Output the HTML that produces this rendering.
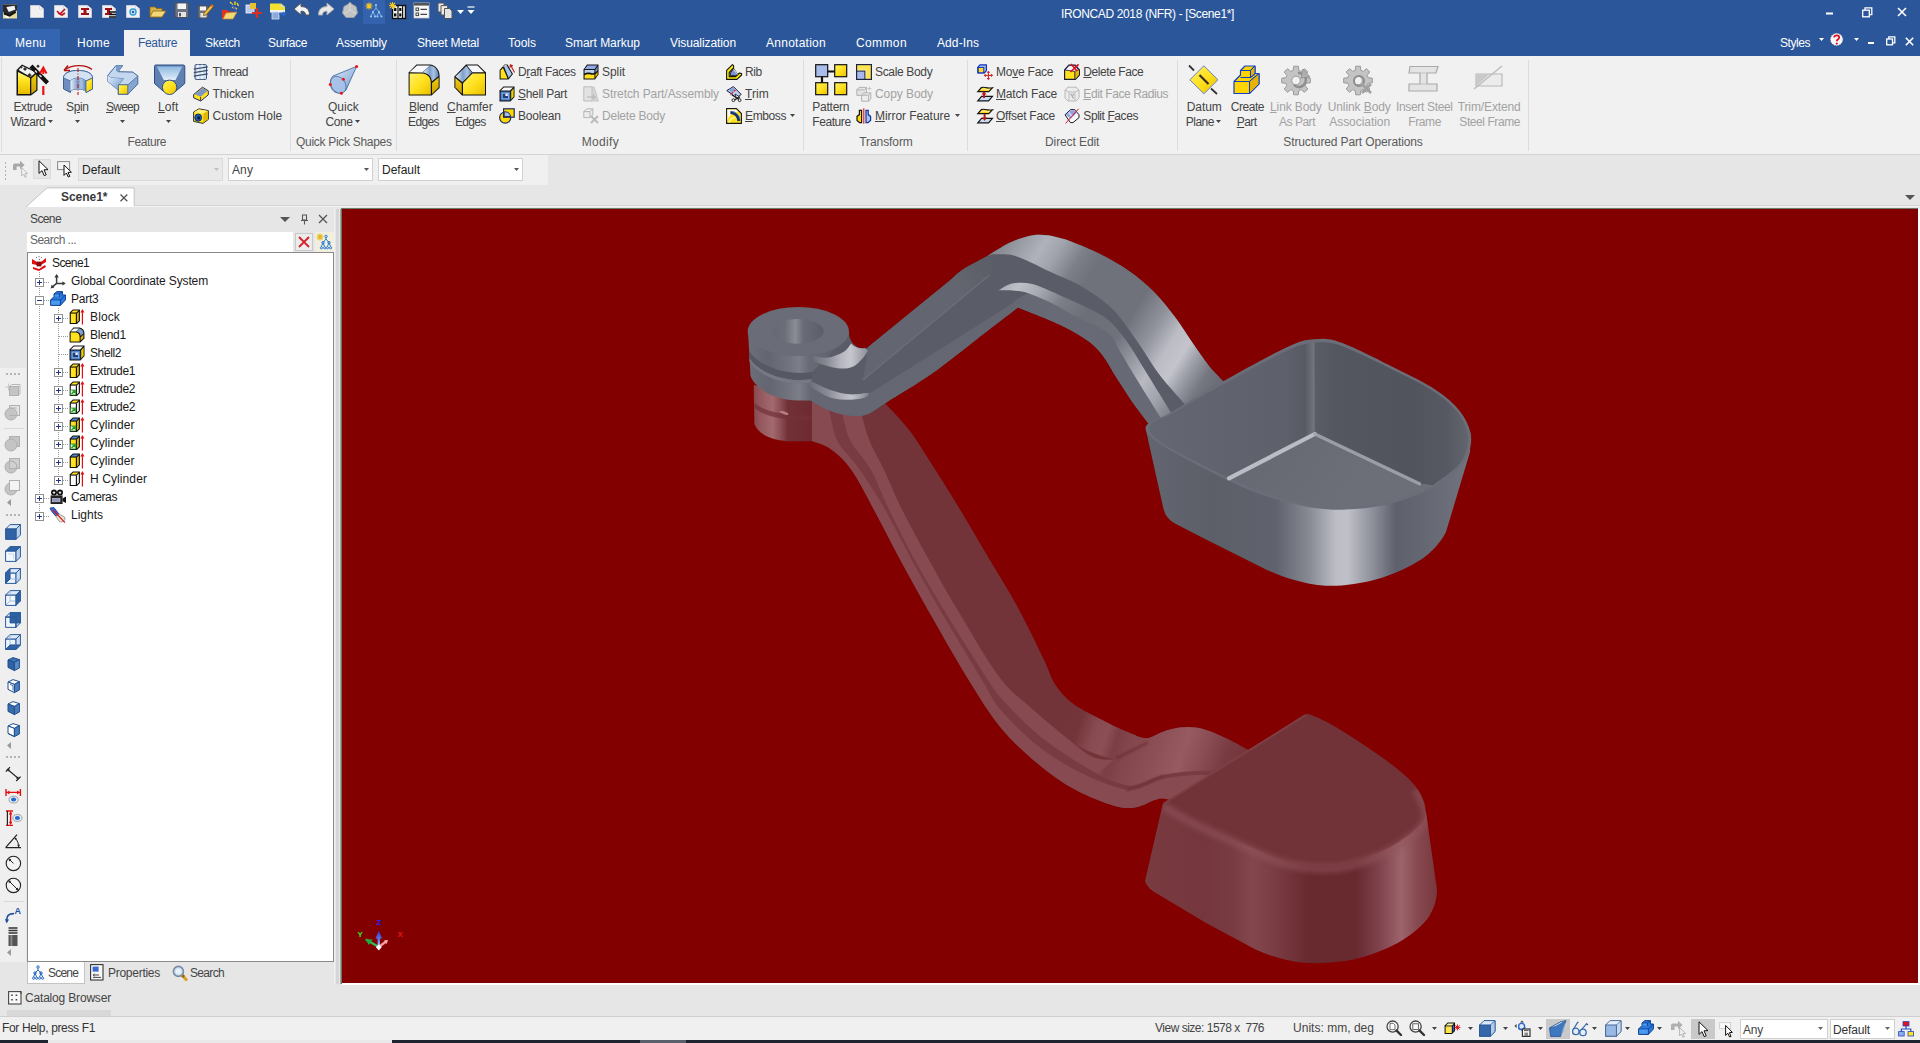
<!DOCTYPE html>
<html><head><meta charset="utf-8"><title>IRONCAD 2018 (NFR) - [Scene1*]</title>
<style>
html,body{margin:0;padding:0;}
body{width:1920px;height:1043px;overflow:hidden;position:relative;background:#e6e6e6;font-family:'Liberation Sans',sans-serif;font-size:12px;line-height:14px;}
.t{position:absolute;white-space:pre;}
u{text-decoration:underline;text-underline-offset:1px;}
svg{display:block;overflow:visible}
</style></head><body>
<div style="position:absolute;left:0px;top:0px;width:1920px;height:56px;background:#2b579a;"></div>
<div style="position:absolute;left:0px;top:29px;width:60px;height:27px;background:#3465b0;"></div>
<div style="position:absolute;left:124px;top:30px;width:66px;height:26px;background:#f1f1f1;"></div>
<div style="position:absolute;left:0px;top:56px;width:1920px;height:98px;background:#f1f1f1;"></div>
<div style="position:absolute;left:0px;top:154px;width:1920px;height:1px;background:#d4d4d4;"></div>
<div style="position:absolute;left:0px;top:155px;width:548px;height:30px;background:#f0f0f0;"></div>
<div style="position:absolute;left:290px;top:60px;width:1px;height:91px;background:#dcdcdc;"></div>
<div style="position:absolute;left:396px;top:60px;width:1px;height:91px;background:#dcdcdc;"></div>
<div style="position:absolute;left:803px;top:60px;width:1px;height:91px;background:#dcdcdc;"></div>
<div style="position:absolute;left:967px;top:60px;width:1px;height:91px;background:#dcdcdc;"></div>
<div style="position:absolute;left:1177px;top:60px;width:1px;height:91px;background:#dcdcdc;"></div>
<div style="position:absolute;left:1528px;top:60px;width:1px;height:91px;background:#dcdcdc;"></div>
<div style="position:absolute;left:1px;top:57px;width:1px;height:95px;background:#dedede;"></div>
<span class="t" style="left:1061.00px;top:7px;color:#ffffff;letter-spacing:-0.369px;">IRONCAD 2018 (NFR) - [Scene1*]</span>
<span class="t" style="left:15.00px;top:36px;color:#ffffff;letter-spacing:0.242px;">Menu</span>
<span class="t" style="left:77.00px;top:36px;color:#ffffff;letter-spacing:0.246px;">Home</span>
<span class="t" style="left:138.00px;top:36px;color:#2b579a;letter-spacing:-0.337px;">Feature</span>
<span class="t" style="left:205.00px;top:36px;color:#ffffff;letter-spacing:-0.281px;">Sketch</span>
<span class="t" style="left:268.00px;top:36px;color:#ffffff;letter-spacing:-0.337px;">Surface</span>
<span class="t" style="left:336.00px;top:36px;color:#ffffff;letter-spacing:-0.127px;">Assembly</span>
<span class="t" style="left:417.00px;top:36px;color:#ffffff;letter-spacing:-0.186px;">Sheet Metal</span>
<span class="t" style="left:508.00px;top:36px;color:#ffffff;">Tools</span>
<span class="t" style="left:565.00px;top:36px;color:#ffffff;letter-spacing:-0.030px;">Smart Markup</span>
<span class="t" style="left:670.00px;top:36px;color:#ffffff;letter-spacing:-0.089px;">Visualization</span>
<span class="t" style="left:766.00px;top:36px;color:#ffffff;letter-spacing:0.261px;">Annotation</span>
<span class="t" style="left:856.00px;top:36px;color:#ffffff;letter-spacing:0.385px;">Common</span>
<span class="t" style="left:937.00px;top:36px;color:#ffffff;letter-spacing:0.092px;">Add-Ins</span>
<span class="t" style="left:1780.00px;top:36px;color:#ffffff;letter-spacing:-0.448px;">Styles</span>
<span class="t" style="left:13.50px;top:100px;color:#444444;letter-spacing:-0.408px;">Extrude</span>
<span class="t" style="left:10.40px;top:115px;color:#444444;letter-spacing:-0.391px;">Wizard</span>
<svg style="position:absolute;left:48px;top:120px;" width="5" height="3" viewBox="0 0 5 3"><path d="M0,0 L5,0 L2.5,3 Z" fill="#444444"/></svg>
<span class="t" style="left:66.00px;top:100px;color:#444444;letter-spacing:-0.383px;">S<u>p</u>in</span>
<svg style="position:absolute;left:75px;top:120px;" width="5" height="3" viewBox="0 0 5 3"><path d="M0,0 L5,0 L2.5,3 Z" fill="#444444"/></svg>
<span class="t" style="left:106.00px;top:100px;color:#444444;letter-spacing:-0.741px;"><u>S</u>weep</span>
<svg style="position:absolute;left:120px;top:120px;" width="5" height="3" viewBox="0 0 5 3"><path d="M0,0 L5,0 L2.5,3 Z" fill="#444444"/></svg>
<span class="t" style="left:158.00px;top:100px;color:#444444;letter-spacing:0.121px;"><u>L</u>oft</span>
<svg style="position:absolute;left:166px;top:120px;" width="5" height="3" viewBox="0 0 5 3"><path d="M0,0 L5,0 L2.5,3 Z" fill="#444444"/></svg>
<span class="t" style="left:212.50px;top:65px;color:#444444;letter-spacing:-0.422px;">Thread</span>
<span class="t" style="left:212.50px;top:87px;color:#444444;letter-spacing:-0.076px;">Thicken</span>
<span class="t" style="left:212.50px;top:109px;color:#444444;letter-spacing:0.040px;">Custom Hole</span>
<span class="t" style="left:127.50px;top:135px;color:#5a5a5a;letter-spacing:-0.408px;">Feature</span>
<span class="t" style="left:328.00px;top:100px;color:#444444;letter-spacing:0.023px;">Quick</span>
<span class="t" style="left:325.40px;top:115px;color:#444444;letter-spacing:-0.347px;">Cone</span>
<svg style="position:absolute;left:355px;top:120px;" width="5" height="3" viewBox="0 0 5 3"><path d="M0,0 L5,0 L2.5,3 Z" fill="#444444"/></svg>
<span class="t" style="left:296.00px;top:135px;color:#5a5a5a;letter-spacing:-0.295px;">Quick Pick Shapes</span>
<span class="t" style="left:409.00px;top:100px;color:#444444;letter-spacing:-0.341px;"><u>B</u>lend</span>
<span class="t" style="left:408.00px;top:115px;color:#444444;letter-spacing:-0.606px;">Edges</span>
<span class="t" style="left:447.00px;top:100px;color:#444444;letter-spacing:-0.045px;"><u>C</u>hamfer</span>
<span class="t" style="left:455.00px;top:115px;color:#444444;letter-spacing:-0.666px;">Edges</span>
<span class="t" style="left:518.00px;top:65px;color:#444444;letter-spacing:-0.392px;">D<u>r</u>aft Faces</span>
<span class="t" style="left:518.00px;top:87px;color:#444444;letter-spacing:-0.303px;"><u>S</u>hell Part</span>
<span class="t" style="left:518.00px;top:109px;color:#444444;letter-spacing:-0.192px;">Boolean</span>
<span class="t" style="left:602.00px;top:65px;color:#444444;letter-spacing:-0.069px;">Split</span>
<span class="t" style="left:602.00px;top:87px;color:#a2a2a2;letter-spacing:-0.082px;">Stretch Part/Assembly</span>
<span class="t" style="left:602.00px;top:109px;color:#a2a2a2;letter-spacing:-0.216px;">Delete Body</span>
<span class="t" style="left:581.70px;top:135px;color:#5a5a5a;letter-spacing:0.326px;">Modify</span>
<span class="t" style="left:745.00px;top:65px;color:#444444;letter-spacing:-0.439px;">Rib</span>
<span class="t" style="left:745.00px;top:87px;color:#444444;letter-spacing:0.038px;"><u>T</u>rim</span>
<span class="t" style="left:745.00px;top:109px;color:#444444;letter-spacing:-0.393px;"><u>E</u>mboss</span>
<svg style="position:absolute;left:790px;top:114px;" width="5" height="3" viewBox="0 0 5 3"><path d="M0,0 L5,0 L2.5,3 Z" fill="#444444"/></svg>
<span class="t" style="left:812.30px;top:100px;color:#444444;letter-spacing:-0.243px;">Pattern</span>
<span class="t" style="left:812.30px;top:115px;color:#444444;letter-spacing:-0.423px;">Feature</span>
<span class="t" style="left:875.00px;top:65px;color:#444444;letter-spacing:-0.340px;">Scale Body</span>
<span class="t" style="left:875.00px;top:87px;color:#a2a2a2;letter-spacing:-0.078px;">Copy Body</span>
<span class="t" style="left:875.00px;top:109px;color:#444444;letter-spacing:-0.073px;"><u>M</u>irror Feature</span>
<svg style="position:absolute;left:955px;top:114px;" width="5" height="3" viewBox="0 0 5 3"><path d="M0,0 L5,0 L2.5,3 Z" fill="#444444"/></svg>
<span class="t" style="left:859.30px;top:135px;color:#5a5a5a;letter-spacing:-0.093px;">Transform</span>
<span class="t" style="left:996.00px;top:65px;color:#444444;letter-spacing:-0.229px;">Mo<u>v</u>e Face</span>
<span class="t" style="left:996.00px;top:87px;color:#444444;letter-spacing:-0.170px;"><u>M</u>atch Face</span>
<span class="t" style="left:996.00px;top:109px;color:#444444;letter-spacing:-0.256px;"><u>O</u>ffset Face</span>
<span class="t" style="left:1083.30px;top:65px;color:#444444;letter-spacing:-0.428px;"><u>D</u>elete Face</span>
<span class="t" style="left:1083.30px;top:87px;color:#a2a2a2;letter-spacing:-0.418px;"><u>E</u>dit Face Radius</span>
<span class="t" style="left:1083.30px;top:109px;color:#444444;letter-spacing:-0.424px;">Split <u>F</u>aces</span>
<span class="t" style="left:1045.00px;top:135px;color:#5a5a5a;letter-spacing:-0.096px;">Direct Edit</span>
<span class="t" style="left:1186.70px;top:100px;color:#444444;letter-spacing:-0.069px;">Datum</span>
<span class="t" style="left:1185.70px;top:115px;color:#444444;letter-spacing:-0.481px;">Plane</span>
<svg style="position:absolute;left:1216px;top:120px;" width="5" height="3" viewBox="0 0 5 3"><path d="M0,0 L5,0 L2.5,3 Z" fill="#444444"/></svg>
<span class="t" style="left:1230.70px;top:100px;color:#444444;letter-spacing:-0.455px;">Create</span>
<span class="t" style="left:1236.70px;top:115px;color:#444444;letter-spacing:-0.504px;"><u>P</u>art</span>
<span class="t" style="left:1270.00px;top:100px;color:#a2a2a2;letter-spacing:-0.111px;"><u>L</u>ink Body</span>
<span class="t" style="left:1279.00px;top:115px;color:#a2a2a2;letter-spacing:-0.480px;">As Part</span>
<span class="t" style="left:1327.70px;top:100px;color:#a2a2a2;letter-spacing:-0.094px;">Unlink <u>B</u>ody</span>
<span class="t" style="left:1329.30px;top:115px;color:#a2a2a2;letter-spacing:-0.061px;">Association</span>
<span class="t" style="left:1396.00px;top:100px;color:#a2a2a2;letter-spacing:-0.334px;">Insert Steel</span>
<span class="t" style="left:1408.30px;top:115px;color:#a2a2a2;letter-spacing:-0.394px;">Frame</span>
<span class="t" style="left:1457.70px;top:100px;color:#a2a2a2;letter-spacing:-0.114px;">Trim/Extend</span>
<span class="t" style="left:1459.30px;top:115px;color:#a2a2a2;letter-spacing:-0.424px;">Steel Frame</span>
<span class="t" style="left:1283.30px;top:135px;color:#5a5a5a;letter-spacing:-0.128px;">Structured Part Operations</span>
<div style="position:absolute;left:78px;top:158px;width:145px;height:23px;background:#e9e9e9;box-sizing:border-box;border:1px solid #dadada"></div>
<div style="position:absolute;left:228px;top:158px;width:145px;height:23px;background:#ffffff;box-sizing:border-box;border:1px solid #d0d0d0"></div>
<div style="position:absolute;left:378px;top:158px;width:145px;height:23px;background:#ffffff;box-sizing:border-box;border:1px solid #d0d0d0"></div>
<span class="t" style="left:82.00px;top:163px;color:#222;">Default</span>
<span class="t" style="left:232.00px;top:163px;color:#444;letter-spacing:0.104px;">Any</span>
<span class="t" style="left:382.00px;top:163px;color:#222;">Default</span>
<svg style="position:absolute;left:214px;top:168px;" width="5" height="3" viewBox="0 0 5 3"><path d="M0,0 L5,0 L2.5,3 Z" fill="#c0c0c0"/></svg>
<svg style="position:absolute;left:364px;top:168px;" width="5" height="3" viewBox="0 0 5 3"><path d="M0,0 L5,0 L2.5,3 Z" fill="#555"/></svg>
<svg style="position:absolute;left:514px;top:168px;" width="5" height="3" viewBox="0 0 5 3"><path d="M0,0 L5,0 L2.5,3 Z" fill="#555"/></svg>
<div style="position:absolute;left:33px;top:159px;width:18px;height:20px;background:#e6e6e6;box-sizing:border-box;border:1px solid #dcdcdc"></div>
<div style="position:absolute;left:5px;top:162px;width:1px;height:2px;background:#b0b0b0;"></div>
<div style="position:absolute;left:5px;top:166px;width:1px;height:2px;background:#b0b0b0;"></div>
<div style="position:absolute;left:5px;top:170px;width:1px;height:2px;background:#b0b0b0;"></div>
<div style="position:absolute;left:5px;top:174px;width:1px;height:2px;background:#b0b0b0;"></div>
<div style="position:absolute;left:5px;top:178px;width:1px;height:2px;background:#b0b0b0;"></div>
<div style="position:absolute;left:134px;top:205px;width:1786px;height:1px;background:#d6d6d6;"></div>
<div style="position:absolute;left:134px;top:206px;width:1786px;height:1px;background:#f2f2f2;"></div>
<svg style="position:absolute;left:26px;top:187px;" width="110" height="21" viewBox="0 0 110 21"><path d="M0,20 L21,0.9 L108.2,0.9 L108.2,20 Z" fill="#ffffff"/><path d="M0,20 L21,0.9 L108.2,0.9 L108.2,19" fill="none" stroke="#c4c4c4" stroke-width="1"/></svg>
<span class="t" style="left:61.00px;top:190px;color:#3a3a3a;font-weight:bold;letter-spacing:-0.043px;">Scene1*</span>
<svg style="position:absolute;left:120px;top:194px;" width="8" height="8" viewBox="0 0 8 8"><path d="M0.5,0.5 L7.3,7.3 M7.3,0.5 L0.5,7.3" stroke="#555" stroke-width="1.3" fill="none"/></svg>
<svg style="position:absolute;left:1905px;top:195px;" width="10" height="5" viewBox="0 0 10 5"><path d="M0,0 L10,0 L5,5 Z" fill="#555"/></svg>
<div style="position:absolute;left:0px;top:368px;width:26px;height:594px;background:#efefef;"></div>
<div style="position:absolute;left:27px;top:207px;width:308px;height:777px;background:#e6e6e6;"></div>
<span class="t" style="left:30.00px;top:212px;color:#444;letter-spacing:-0.606px;">Scene</span>
<svg style="position:absolute;left:280px;top:217px;" width="10" height="5" viewBox="0 0 10 5"><path d="M0,0 L10,0 L5,5 Z" fill="#555"/></svg>
<svg style="position:absolute;left:300px;top:214px;" width="9" height="11" viewBox="0 0 9 11"><path d="M2.5,1 L6.5,1 L6.5,6 L2.5,6 Z M1,6.5 L8,6.5 M4.5,6.5 L4.5,10.5" stroke="#555" stroke-width="1.1" fill="none"/></svg>
<svg style="position:absolute;left:318px;top:214px;" width="10" height="10" viewBox="0 0 10 10"><path d="M1,1 L9,9 M9,1 L1,9" stroke="#555" stroke-width="1.3" fill="none"/></svg>
<div style="position:absolute;left:27px;top:232px;width:266px;height:20px;background:#ffffff;"></div>
<span class="t" style="left:30.00px;top:233px;color:#666;letter-spacing:-0.536px;">Search ...</span>
<div style="position:absolute;left:295px;top:233px;width:18px;height:18px;background:#ececec;box-sizing:border-box;border:1px solid #c8c8c8"></div>
<svg style="position:absolute;left:297px;top:235px;" width="14" height="14" viewBox="0 0 14 14"><path d="M2,2 L12,12 M12,2 L2,12" stroke="#d8202a" stroke-width="1.8" fill="none"/></svg>
<div style="position:absolute;left:315px;top:232px;width:19px;height:20px;background:#f2efdf;"></div>
<div style="position:absolute;left:27px;top:252px;width:307px;height:710px;background:#ffffff;box-sizing:border-box;border:1px solid #8a8a8c"></div>
<div style="position:absolute;left:334px;top:209px;width:1px;height:775px;background:#f0f0f0;"></div>
<div style="position:absolute;left:336px;top:209px;width:3px;height:775px;background:#d6d6d6;"></div>
<div style="position:absolute;left:339px;top:209px;width:1px;height:775px;background:#e8e8e8;"></div>
<div style="position:absolute;left:340px;top:209px;width:1px;height:775px;background:#a4a4a4;"></div>
<span class="t" style="left:52.00px;top:256px;color:#1a1a1a;letter-spacing:-0.617px;">Scene1</span>
<span class="t" style="left:71.00px;top:274px;color:#1a1a1a;letter-spacing:-0.128px;">Global Coordinate System</span>
<span class="t" style="left:71.00px;top:292px;color:#1a1a1a;letter-spacing:-0.237px;">Part3</span>
<span class="t" style="left:90.00px;top:310px;color:#1a1a1a;letter-spacing:0.131px;">Block</span>
<span class="t" style="left:90.00px;top:328px;color:#1a1a1a;letter-spacing:-0.229px;">Blend1</span>
<span class="t" style="left:90.00px;top:346px;color:#1a1a1a;letter-spacing:-0.393px;">Shell2</span>
<span class="t" style="left:90.00px;top:364px;color:#1a1a1a;letter-spacing:-0.379px;">Extrude1</span>
<span class="t" style="left:90.00px;top:382px;color:#1a1a1a;letter-spacing:-0.379px;">Extrude2</span>
<span class="t" style="left:90.00px;top:400px;color:#1a1a1a;letter-spacing:-0.379px;">Extrude2</span>
<span class="t" style="left:90.00px;top:418px;color:#1a1a1a;letter-spacing:0.061px;">Cylinder</span>
<span class="t" style="left:90.00px;top:436px;color:#1a1a1a;letter-spacing:0.061px;">Cylinder</span>
<span class="t" style="left:90.00px;top:454px;color:#1a1a1a;letter-spacing:0.061px;">Cylinder</span>
<span class="t" style="left:90.00px;top:472px;color:#1a1a1a;letter-spacing:0.098px;">H Cylinder</span>
<span class="t" style="left:71.00px;top:490px;color:#1a1a1a;letter-spacing:-0.384px;">Cameras</span>
<span class="t" style="left:71.00px;top:508px;color:#1a1a1a;letter-spacing:-0.005px;">Lights</span>
<div style="position:absolute;left:39px;top:272px;width:1px;height:245px;background:repeating-linear-gradient(to bottom,#9a9a9a 0 1px,transparent 1px 2px)"></div>
<div style="position:absolute;left:58px;top:308px;width:1px;height:173px;background:repeating-linear-gradient(to bottom,#9a9a9a 0 1px,transparent 1px 2px)"></div>
<div style="position:absolute;left:44px;top:282px;width:6px;height:1px;background:repeating-linear-gradient(to right,#9a9a9a 0 1px,transparent 1px 2px)"></div>
<div style="position:absolute;left:44px;top:300px;width:6px;height:1px;background:repeating-linear-gradient(to right,#9a9a9a 0 1px,transparent 1px 2px)"></div>
<div style="position:absolute;left:63px;top:318px;width:6px;height:1px;background:repeating-linear-gradient(to right,#9a9a9a 0 1px,transparent 1px 2px)"></div>
<div style="position:absolute;left:59px;top:336px;width:10px;height:1px;background:repeating-linear-gradient(to right,#9a9a9a 0 1px,transparent 1px 2px)"></div>
<div style="position:absolute;left:59px;top:354px;width:10px;height:1px;background:repeating-linear-gradient(to right,#9a9a9a 0 1px,transparent 1px 2px)"></div>
<div style="position:absolute;left:63px;top:372px;width:6px;height:1px;background:repeating-linear-gradient(to right,#9a9a9a 0 1px,transparent 1px 2px)"></div>
<div style="position:absolute;left:63px;top:390px;width:6px;height:1px;background:repeating-linear-gradient(to right,#9a9a9a 0 1px,transparent 1px 2px)"></div>
<div style="position:absolute;left:63px;top:408px;width:6px;height:1px;background:repeating-linear-gradient(to right,#9a9a9a 0 1px,transparent 1px 2px)"></div>
<div style="position:absolute;left:63px;top:426px;width:6px;height:1px;background:repeating-linear-gradient(to right,#9a9a9a 0 1px,transparent 1px 2px)"></div>
<div style="position:absolute;left:63px;top:444px;width:6px;height:1px;background:repeating-linear-gradient(to right,#9a9a9a 0 1px,transparent 1px 2px)"></div>
<div style="position:absolute;left:63px;top:462px;width:6px;height:1px;background:repeating-linear-gradient(to right,#9a9a9a 0 1px,transparent 1px 2px)"></div>
<div style="position:absolute;left:63px;top:480px;width:6px;height:1px;background:repeating-linear-gradient(to right,#9a9a9a 0 1px,transparent 1px 2px)"></div>
<div style="position:absolute;left:44px;top:498px;width:6px;height:1px;background:repeating-linear-gradient(to right,#9a9a9a 0 1px,transparent 1px 2px)"></div>
<div style="position:absolute;left:44px;top:516px;width:6px;height:1px;background:repeating-linear-gradient(to right,#9a9a9a 0 1px,transparent 1px 2px)"></div>
<svg style="position:absolute;left:35px;top:278px;" width="9" height="9" viewBox="0 0 9 9"><rect x="0.5" y="0.5" width="8" height="8" fill="#fff" stroke="#919191"/><path d="M2,4.5 L7,4.5" stroke="#26348a" stroke-width="1"/><path d="M4.5,2 L4.5,7" stroke="#26348a" stroke-width="1"/></svg>
<svg style="position:absolute;left:35px;top:296px;" width="9" height="9" viewBox="0 0 9 9"><rect x="0.5" y="0.5" width="8" height="8" fill="#fff" stroke="#919191"/><path d="M2,4.5 L7,4.5" stroke="#26348a" stroke-width="1"/></svg>
<svg style="position:absolute;left:54px;top:314px;" width="9" height="9" viewBox="0 0 9 9"><rect x="0.5" y="0.5" width="8" height="8" fill="#fff" stroke="#919191"/><path d="M2,4.5 L7,4.5" stroke="#26348a" stroke-width="1"/><path d="M4.5,2 L4.5,7" stroke="#26348a" stroke-width="1"/></svg>
<svg style="position:absolute;left:54px;top:368px;" width="9" height="9" viewBox="0 0 9 9"><rect x="0.5" y="0.5" width="8" height="8" fill="#fff" stroke="#919191"/><path d="M2,4.5 L7,4.5" stroke="#26348a" stroke-width="1"/><path d="M4.5,2 L4.5,7" stroke="#26348a" stroke-width="1"/></svg>
<svg style="position:absolute;left:54px;top:386px;" width="9" height="9" viewBox="0 0 9 9"><rect x="0.5" y="0.5" width="8" height="8" fill="#fff" stroke="#919191"/><path d="M2,4.5 L7,4.5" stroke="#26348a" stroke-width="1"/><path d="M4.5,2 L4.5,7" stroke="#26348a" stroke-width="1"/></svg>
<svg style="position:absolute;left:54px;top:404px;" width="9" height="9" viewBox="0 0 9 9"><rect x="0.5" y="0.5" width="8" height="8" fill="#fff" stroke="#919191"/><path d="M2,4.5 L7,4.5" stroke="#26348a" stroke-width="1"/><path d="M4.5,2 L4.5,7" stroke="#26348a" stroke-width="1"/></svg>
<svg style="position:absolute;left:54px;top:422px;" width="9" height="9" viewBox="0 0 9 9"><rect x="0.5" y="0.5" width="8" height="8" fill="#fff" stroke="#919191"/><path d="M2,4.5 L7,4.5" stroke="#26348a" stroke-width="1"/><path d="M4.5,2 L4.5,7" stroke="#26348a" stroke-width="1"/></svg>
<svg style="position:absolute;left:54px;top:440px;" width="9" height="9" viewBox="0 0 9 9"><rect x="0.5" y="0.5" width="8" height="8" fill="#fff" stroke="#919191"/><path d="M2,4.5 L7,4.5" stroke="#26348a" stroke-width="1"/><path d="M4.5,2 L4.5,7" stroke="#26348a" stroke-width="1"/></svg>
<svg style="position:absolute;left:54px;top:458px;" width="9" height="9" viewBox="0 0 9 9"><rect x="0.5" y="0.5" width="8" height="8" fill="#fff" stroke="#919191"/><path d="M2,4.5 L7,4.5" stroke="#26348a" stroke-width="1"/><path d="M4.5,2 L4.5,7" stroke="#26348a" stroke-width="1"/></svg>
<svg style="position:absolute;left:54px;top:476px;" width="9" height="9" viewBox="0 0 9 9"><rect x="0.5" y="0.5" width="8" height="8" fill="#fff" stroke="#919191"/><path d="M2,4.5 L7,4.5" stroke="#26348a" stroke-width="1"/><path d="M4.5,2 L4.5,7" stroke="#26348a" stroke-width="1"/></svg>
<svg style="position:absolute;left:35px;top:494px;" width="9" height="9" viewBox="0 0 9 9"><rect x="0.5" y="0.5" width="8" height="8" fill="#fff" stroke="#919191"/><path d="M2,4.5 L7,4.5" stroke="#26348a" stroke-width="1"/><path d="M4.5,2 L4.5,7" stroke="#26348a" stroke-width="1"/></svg>
<svg style="position:absolute;left:35px;top:512px;" width="9" height="9" viewBox="0 0 9 9"><rect x="0.5" y="0.5" width="8" height="8" fill="#fff" stroke="#919191"/><path d="M2,4.5 L7,4.5" stroke="#26348a" stroke-width="1"/><path d="M4.5,2 L4.5,7" stroke="#26348a" stroke-width="1"/></svg>
<div style="position:absolute;left:27px;top:962px;width:58px;height:22px;background:#fdfdfd;box-sizing:border-box;border:1px solid #c4c4c4;border-top:none"></div>
<span class="t" style="left:48.00px;top:966px;color:#444;letter-spacing:-0.806px;">Scene</span>
<span class="t" style="left:108.00px;top:966px;color:#444;letter-spacing:-0.270px;">Properties</span>
<span class="t" style="left:190.00px;top:966px;color:#444;letter-spacing:-0.672px;">Search</span>
<span class="t" style="left:25.00px;top:991px;color:#444;letter-spacing:-0.181px;">Catalog Browser</span>
<div style="position:absolute;left:7px;top:1010px;width:104px;height:6px;background:#d8d8d8;"></div>
<div style="position:absolute;left:0px;top:1016px;width:1920px;height:1px;background:#cfcfcf;"></div>
<div style="position:absolute;left:0px;top:1017px;width:1920px;height:23px;background:#f0f0f0;"></div>
<span class="t" style="left:2.00px;top:1021px;color:#333;letter-spacing:-0.354px;">For Help, press F1</span>
<span class="t" style="left:1155.00px;top:1021px;color:#444;letter-spacing:-0.494px;">View size: 1578 x  776</span>
<span class="t" style="left:1293.00px;top:1021px;color:#444;letter-spacing:0.021px;">Units: mm, deg</span>
<div style="position:absolute;left:1740px;top:1019px;width:88px;height:20px;background:#ffffff;box-sizing:border-box;border:1px solid #d0d0d0"></div>
<div style="position:absolute;left:1830px;top:1019px;width:65px;height:20px;background:#ffffff;box-sizing:border-box;border:1px solid #d0d0d0"></div>
<span class="t" style="left:1743.00px;top:1023px;color:#444;letter-spacing:-0.229px;">Any</span>
<span class="t" style="left:1833.00px;top:1023px;color:#333;letter-spacing:-0.147px;">Default</span>
<svg style="position:absolute;left:1818px;top:1027px;" width="5" height="3" viewBox="0 0 5 3"><path d="M0,0 L5,0 L2.5,3 Z" fill="#666"/></svg>
<svg style="position:absolute;left:1885px;top:1027px;" width="5" height="3" viewBox="0 0 5 3"><path d="M0,0 L5,0 L2.5,3 Z" fill="#666"/></svg>
<div style="position:absolute;left:1546px;top:1019px;width:24px;height:20px;background:#c9c9c9;"></div>
<div style="position:absolute;left:1691px;top:1019px;width:24px;height:20px;background:#c9c9c9;"></div>
<svg style="position:absolute;left:1432px;top:1027px;" width="5" height="3" viewBox="0 0 5 3"><path d="M0,0 L5,0 L2.5,3 Z" fill="#444"/></svg>
<svg style="position:absolute;left:1468px;top:1027px;" width="5" height="3" viewBox="0 0 5 3"><path d="M0,0 L5,0 L2.5,3 Z" fill="#444"/></svg>
<svg style="position:absolute;left:1503px;top:1027px;" width="5" height="3" viewBox="0 0 5 3"><path d="M0,0 L5,0 L2.5,3 Z" fill="#444"/></svg>
<svg style="position:absolute;left:1538px;top:1027px;" width="5" height="3" viewBox="0 0 5 3"><path d="M0,0 L5,0 L2.5,3 Z" fill="#444"/></svg>
<svg style="position:absolute;left:1592px;top:1027px;" width="5" height="3" viewBox="0 0 5 3"><path d="M0,0 L5,0 L2.5,3 Z" fill="#444"/></svg>
<svg style="position:absolute;left:1625px;top:1027px;" width="5" height="3" viewBox="0 0 5 3"><path d="M0,0 L5,0 L2.5,3 Z" fill="#444"/></svg>
<svg style="position:absolute;left:1657px;top:1027px;" width="5" height="3" viewBox="0 0 5 3"><path d="M0,0 L5,0 L2.5,3 Z" fill="#444"/></svg>
<div style="position:absolute;left:0px;top:1040px;width:1920px;height:3px;background:#1e2530;"></div>
<div style="position:absolute;left:48px;top:1040px;width:344px;height:3px;background:#e9e9e9;"></div>
<div style="position:absolute;left:640px;top:1040px;width:46px;height:3px;background:#5a616c;"></div>
<svg style="position:absolute;left:341px;top:208px" width="1577" height="776" viewBox="341 208 1577 776">
<defs>
<filter id="blur0" x="-20%" y="-20%" width="140%" height="140%"><feGaussianBlur stdDeviation="0.7"/></filter>
<filter id="blur1" x="-20%" y="-20%" width="140%" height="140%"><feGaussianBlur stdDeviation="1.2"/></filter>
<filter id="blur2" x="-20%" y="-20%" width="140%" height="140%"><feGaussianBlur stdDeviation="2.5"/></filter>
<linearGradient id="gA" gradientUnits="userSpaceOnUse" x1="990" y1="250" x2="1215" y2="392"><stop offset="0" stop-color="#7f8188"/><stop offset="0.08" stop-color="#999ba4"/><stop offset="0.16" stop-color="#b0b2bb"/><stop offset="0.22" stop-color="#a1a3ac"/><stop offset="0.3" stop-color="#7c7e88"/><stop offset="0.37" stop-color="#6f717b"/><stop offset="0.58" stop-color="#6f717b"/><stop offset="0.68" stop-color="#90929c"/><stop offset="0.76" stop-color="#bbbcc4"/><stop offset="0.82" stop-color="#c4c5cc"/><stop offset="0.88" stop-color="#9799a3"/><stop offset="0.94" stop-color="#747680"/><stop offset="1" stop-color="#686a74"/></linearGradient>
<linearGradient id="gC" gradientUnits="userSpaceOnUse" x1="1000" y1="285" x2="1172" y2="414"><stop offset="0" stop-color="#a5a7b0"/><stop offset="0.07" stop-color="#bfc0c7"/><stop offset="0.17" stop-color="#a5a7b0"/><stop offset="0.27" stop-color="#7c7e88"/><stop offset="0.4" stop-color="#6c6e78"/><stop offset="0.58" stop-color="#6f717b"/><stop offset="0.7" stop-color="#9698a1"/><stop offset="0.8" stop-color="#b8b9c1"/><stop offset="0.9" stop-color="#a1a3ac"/><stop offset="1" stop-color="#7b7d87"/></linearGradient>
<linearGradient id="gD" gradientUnits="userSpaceOnUse" x1="830" y1="400" x2="1150" y2="400"><stop offset="0" stop-color="#656772"/><stop offset="0.55" stop-color="#646671"/><stop offset="0.7" stop-color="#686a75"/><stop offset="1" stop-color="#676974"/></linearGradient>
<linearGradient id="gRBoss" gradientUnits="userSpaceOnUse" x1="754" y1="0" x2="812" y2="0"><stop offset="0" stop-color="#874a50"/><stop offset="0.15" stop-color="#975c62"/><stop offset="0.32" stop-color="#a2696f"/><stop offset="0.46" stop-color="#8b4e54"/><stop offset="0.58" stop-color="#723137"/><stop offset="1" stop-color="#6d2b31"/></linearGradient>
<linearGradient id="gDomeSide" gradientUnits="userSpaceOnUse" x1="1145" y1="0" x2="1438" y2="0"><stop offset="0" stop-color="#793a40"/><stop offset="0.2" stop-color="#75373d"/><stop offset="0.3" stop-color="#783b41"/><stop offset="0.365" stop-color="#83474d"/><stop offset="0.45" stop-color="#793c42"/><stop offset="0.56" stop-color="#68292f"/><stop offset="0.72" stop-color="#68292f"/><stop offset="0.8" stop-color="#7e434c"/><stop offset="0.875" stop-color="#9d646c"/><stop offset="0.93" stop-color="#874950"/><stop offset="1" stop-color="#77373d"/></linearGradient>
<linearGradient id="gRLow" gradientUnits="userSpaceOnUse" x1="1060" y1="700" x2="1250" y2="766"><stop offset="0" stop-color="#733439"/><stop offset="0.13" stop-color="#74353a"/><stop offset="0.21" stop-color="#874a50"/><stop offset="0.275" stop-color="#8c4f55"/><stop offset="0.33" stop-color="#7b3e44"/><stop offset="0.4" stop-color="#83464c"/><stop offset="0.53" stop-color="#8c4f55"/><stop offset="0.66" stop-color="#975a60"/><stop offset="0.76" stop-color="#8a4d53"/><stop offset="0.87" stop-color="#783b41"/><stop offset="1" stop-color="#733439"/></linearGradient>
<clipPath id="cpDome"><path d="M1163,803 L1145,881 C1147,887 1152,891 1158,894.3 L1207,923.6 L1256,949.7 C1272,957 1290,962 1305,962.8 C1322,964 1340,962 1353.8,959.5 C1372,955 1390,948 1402.7,940 C1414,933 1424,924 1428.8,917 C1434,908 1437,900 1437,890 L1426,812 L1414,800 Z"/><path d="M1163.0,803.0 C1167.6,805.7 1178.0,812.8 1190.8,819.3 C1203.6,825.8 1223.4,834.9 1239.7,842.0 C1256.0,849.1 1272.3,857.9 1288.6,861.7 C1304.9,865.5 1322.3,866.6 1337.5,865.0 C1352.7,863.4 1367.5,857.5 1380.0,852.0 C1392.5,846.5 1404.9,838.5 1412.5,832.0 C1420.1,825.5 1425.0,820.3 1425.6,812.8 C1426.1,805.2 1422.3,795.4 1415.8,786.7 C1409.3,778.0 1399.5,770.4 1386.4,760.6 C1373.4,750.8 1349.9,735.6 1337.5,728.0 C1325.1,720.4 1317.4,717.5 1312.0,715.2 C1306.6,712.9 1306.2,714.4 1305.0,714.3 Z"/></clipPath>
<linearGradient id="gBossSide" gradientUnits="userSpaceOnUse" x1="748" y1="0" x2="850" y2="0"><stop offset="0" stop-color="#6c6e78"/><stop offset="0.2" stop-color="#636570"/><stop offset="0.4" stop-color="#71737e"/><stop offset="0.5" stop-color="#7c7e88"/><stop offset="0.6" stop-color="#686a75"/><stop offset="1" stop-color="#5b5d68"/></linearGradient>
<linearGradient id="gHole" gradientUnits="userSpaceOnUse" x1="772" y1="0" x2="824" y2="0"><stop offset="0" stop-color="#666873"/><stop offset="0.25" stop-color="#6c6e78"/><stop offset="0.45" stop-color="#8a8c96"/><stop offset="0.6" stop-color="#696b76"/><stop offset="1" stop-color="#5b5d68"/></linearGradient>
<linearGradient id="gNeck" gradientUnits="userSpaceOnUse" x1="812" y1="0" x2="869" y2="0"><stop offset="0" stop-color="#6b6d78"/><stop offset="0.25" stop-color="#878993"/><stop offset="0.5" stop-color="#b4b5be"/><stop offset="0.68" stop-color="#c6c7ce"/><stop offset="0.85" stop-color="#a5a7b0"/><stop offset="1" stop-color="#898b95"/></linearGradient>
<linearGradient id="gNeck2" gradientUnits="userSpaceOnUse" x1="809" y1="0" x2="870" y2="0"><stop offset="0" stop-color="#6b6d78"/><stop offset="0.3" stop-color="#898b95"/><stop offset="0.55" stop-color="#b1b2bb"/><stop offset="0.7" stop-color="#c2c3ca"/><stop offset="0.88" stop-color="#999ba4"/><stop offset="1" stop-color="#777983"/></linearGradient>
<linearGradient id="gAL" gradientUnits="userSpaceOnUse" x1="870" y1="350" x2="995" y2="262"><stop offset="0" stop-color="#636570"/><stop offset="0.7" stop-color="#636570"/><stop offset="0.9" stop-color="#5e6068"/><stop offset="1" stop-color="#5a5c67"/></linearGradient>
<linearGradient id="gCupOut" gradientUnits="userSpaceOnUse" x1="1147" y1="0" x2="1470" y2="0"><stop offset="0" stop-color="#636570"/><stop offset="0.2" stop-color="#5c5e68"/><stop offset="0.4" stop-color="#60626d"/><stop offset="0.5" stop-color="#868892"/><stop offset="0.585" stop-color="#bcbdc5"/><stop offset="0.62" stop-color="#c0c1c8"/><stop offset="0.7" stop-color="#8c8e99"/><stop offset="0.77" stop-color="#5e606b"/><stop offset="0.86" stop-color="#656772"/><stop offset="1" stop-color="#71737e"/></linearGradient>
<linearGradient id="gInL" gradientUnits="userSpaceOnUse" x1="1150" y1="0" x2="1330" y2="0"><stop offset="0" stop-color="#646671"/><stop offset="0.75" stop-color="#5e606b"/><stop offset="0.86" stop-color="#575963"/><stop offset="0.915" stop-color="#747680"/><stop offset="0.96" stop-color="#5e6068"/><stop offset="1" stop-color="#585a64"/></linearGradient>
<linearGradient id="gInR" gradientUnits="userSpaceOnUse" x1="1315" y1="0" x2="1470" y2="0"><stop offset="0" stop-color="#5a5c66"/><stop offset="0.12" stop-color="#545660"/><stop offset="0.6" stop-color="#51535d"/><stop offset="0.85" stop-color="#565862"/><stop offset="1" stop-color="#63656f"/></linearGradient>
<linearGradient id="gFloor" gradientUnits="userSpaceOnUse" x1="1230" y1="440" x2="1340" y2="520"><stop offset="0" stop-color="#656771"/><stop offset="1" stop-color="#6d6f78"/></linearGradient>
<linearGradient id="gZ" gradientUnits="userSpaceOnUse" x1="0" y1="930" x2="0" y2="947"><stop offset="0" stop-color="#2030c8"/><stop offset="0.5" stop-color="#5a70e8"/><stop offset="1" stop-color="#b4c4ff"/></linearGradient>
</defs>
<rect x="341" y="208" width="1577" height="776" fill="#820000"/>
<path d="M753.7,385 L754.4,424 C758,434 772,441.2 792,441.2 L812,441.2 L812,396 Z" fill="url(#gRBoss)" />
<path d="M754.4,408 C765,417 785,421 812,420 L812,415 C785,416 765,412 754.4,403 Z" fill="#733138" opacity=".7"/>
<path d="M781,411.5 L787,414" fill="none" stroke="#b57c82" stroke-width="2.5" stroke-linecap="round" filter="url(#blur0)"/>
<path d="M812.0,396.0 L880.0,398.0 C884.7,403.1 899.8,418.0 908.3,428.9 C916.8,439.8 922.7,450.0 931.3,463.4 C939.9,476.8 950.4,493.6 960.0,509.4 C969.6,525.2 979.2,542.0 988.8,558.3 C998.4,574.6 1008.4,590.0 1017.6,607.0 C1026.8,624.0 1037.8,647.1 1044.0,660.0 C1050.2,672.9 1050.1,677.1 1055.0,684.4 C1059.9,691.7 1064.8,697.7 1073.3,704.0 C1081.8,710.3 1096.5,717.1 1106.0,722.0 C1115.5,726.9 1123.6,730.6 1130.4,733.3 C1137.2,736.0 1141.3,738.5 1146.7,738.2 C1152.1,737.9 1157.6,733.5 1163.0,731.7 C1168.4,729.9 1173.9,728.3 1179.3,727.6 C1184.7,726.9 1189.6,726.7 1195.6,727.6 C1201.5,728.5 1206.8,729.9 1215.0,733.3 C1223.2,736.7 1235.0,742.5 1244.5,748.0 C1254.0,753.5 1267.4,763.0 1272.0,766.0 L1195.0,806.0 C1190.2,804.8 1172.7,800.0 1166.0,799.0 C1159.3,798.0 1159.4,798.7 1154.8,800.0 C1150.2,801.3 1144.0,805.5 1138.5,806.7 C1133.0,808.0 1128.8,808.6 1122.0,807.5 C1115.2,806.4 1107.3,803.9 1097.8,800.0 C1088.3,796.1 1076.1,790.7 1065.2,783.9 C1054.3,777.1 1043.5,768.9 1032.6,759.4 C1021.7,749.9 1010.6,740.0 1000.0,726.8 C989.4,713.6 980.2,698.5 968.7,680.0 C957.2,661.5 942.3,635.1 931.3,615.8 C920.3,596.5 912.1,581.7 902.5,564.0 C892.9,546.3 882.4,525.2 873.8,509.4 C865.2,493.6 858.0,479.1 850.8,469.0 C843.6,458.9 837.1,453.7 830.6,449.0 C824.1,444.3 815.1,442.3 812.0,441.0 Z" fill="#733439" />
<path d="M812.0,396.0 L856.0,394.0 C857.1,398.0 860.2,410.0 862.5,418.0 C864.8,426.0 866.3,433.2 870.0,442.0 C873.7,450.8 879.3,459.8 884.6,471.0 C889.9,482.2 894.2,493.9 902.0,509.4 C909.8,524.9 921.5,546.3 931.3,564.0 C941.1,581.7 949.5,596.8 961.0,615.8 C972.5,634.8 988.1,662.5 1000.0,678.0 C1011.9,693.5 1021.7,699.2 1032.6,709.0 C1043.5,718.8 1055.4,728.7 1065.2,736.6 C1075.0,744.5 1083.2,752.4 1091.3,756.2 C1099.4,760.0 1107.0,760.0 1114.0,759.4 C1121.0,758.8 1130.3,754.0 1133.6,752.9 L1138.5,806.7 C1135.8,806.8 1128.8,808.6 1122.0,807.5 C1115.2,806.4 1107.3,803.9 1097.8,800.0 C1088.3,796.1 1076.1,790.7 1065.2,783.9 C1054.3,777.1 1043.5,768.9 1032.6,759.4 C1021.7,749.9 1010.6,740.0 1000.0,726.8 C989.4,713.6 980.2,698.5 968.7,680.0 C957.2,661.5 942.3,635.1 931.3,615.8 C920.3,596.5 912.1,581.7 902.5,564.0 C892.9,546.3 882.4,525.2 873.8,509.4 C865.2,493.6 858.0,479.1 850.8,469.0 C843.6,458.9 837.1,453.7 830.6,449.0 C824.1,444.3 815.1,442.3 812.0,441.0 Z" fill="#874a50" />
<path d="M1065.2,754.5 C1070.6,757.8 1088.3,769.1 1097.8,774.0 C1107.3,778.9 1115.2,782.2 1122.0,784.0 C1128.8,785.8 1131.7,786.0 1138.5,784.5 C1145.3,783.0 1153.6,777.2 1163.0,775.0 C1172.4,772.8 1184.7,771.7 1195.0,771.0 C1205.3,770.3 1220.0,771.0 1225.0,771.0 L1195.0,806.0 C1190.2,804.8 1172.7,800.0 1166.0,799.0 C1159.3,798.0 1159.4,798.7 1154.8,800.0 C1150.2,801.3 1144.0,805.5 1138.5,806.7 C1133.0,808.0 1128.8,808.6 1122.0,807.5 C1115.2,806.4 1101.8,801.2 1097.8,800.0 Z" fill="#874a50" />
<path d="M838.0,394.0 C838.9,398.0 841.1,410.0 843.3,418.0 C845.5,426.0 846.4,433.3 851.0,442.0 C855.6,450.7 864.7,458.8 871.0,470.0 C877.3,481.2 881.3,493.7 889.0,509.4 C896.7,525.1 907.2,546.3 917.0,564.0 C926.8,581.7 935.7,596.5 947.5,615.8 C959.3,635.1 978.9,666.1 988.0,680.0 C997.1,693.9 994.6,690.7 1002.0,699.0 C1009.4,707.3 1022.1,720.8 1032.6,730.0 C1043.1,739.2 1054.3,747.2 1065.2,754.5 C1076.1,761.8 1088.3,769.1 1097.8,774.0 C1107.3,778.9 1115.2,782.2 1122.0,784.0 C1128.8,785.8 1131.7,786.0 1138.5,784.5 C1145.3,783.0 1153.6,777.2 1163.0,775.0 C1172.4,772.8 1184.7,771.7 1195.0,771.0 C1205.3,770.3 1220.0,771.0 1225.0,771.0 L1225.0,776.0 C1220.0,775.8 1205.3,774.5 1195.0,775.0 C1184.7,775.5 1172.4,776.7 1163.0,779.0 C1153.6,781.3 1145.3,787.1 1138.5,788.7 C1131.7,790.3 1128.8,790.1 1122.0,788.7 C1115.2,787.4 1107.3,784.7 1097.8,780.6 C1088.3,776.5 1076.1,770.8 1065.2,764.3 C1054.3,757.8 1043.5,750.7 1032.6,741.5 C1021.7,732.3 1008.4,719.2 1000.0,709.0 C991.6,698.8 991.4,695.5 982.0,680.0 C972.6,664.5 954.8,635.1 943.5,615.8 C932.2,596.5 923.8,581.7 914.0,564.0 C904.2,546.3 894.0,525.1 885.0,509.4 C876.0,493.7 867.8,481.2 860.0,470.0 C852.2,458.8 842.9,450.7 838.0,442.0 C833.1,433.3 832.9,426.0 830.9,418.0 C828.9,410.0 826.8,398.0 826.0,394.0 Z" fill="#783b41" />
<path d="M1044.0,660.0 C1045.8,664.1 1050.1,677.1 1055.0,684.4 C1059.9,691.7 1064.8,697.7 1073.3,704.0 C1081.8,710.3 1096.5,717.1 1106.0,722.0 C1115.5,726.9 1123.6,730.6 1130.4,733.3 C1137.2,736.0 1141.3,738.5 1146.7,738.2 C1152.1,737.9 1157.6,733.5 1163.0,731.7 C1168.4,729.9 1173.9,728.3 1179.3,727.6 C1184.7,726.9 1189.6,726.7 1195.6,727.6 C1201.5,728.5 1206.8,729.9 1215.0,733.3 C1223.2,736.7 1235.0,742.5 1244.5,748.0 C1254.0,753.5 1267.4,763.0 1272.0,766.0 L1225.0,771.0 C1220.0,771.0 1205.3,770.3 1195.0,771.0 C1184.7,771.7 1172.4,772.8 1163.0,775.0 C1153.6,777.2 1145.3,783.0 1138.5,784.5 C1131.7,786.0 1128.8,785.8 1122.0,784.0 C1115.2,782.2 1101.8,775.7 1097.8,774.0 L1114.0,759.4 C1087.0,752.9 1075.0,744.5 1065.2,736.6 C1055.4,728.7 1043.5,718.8 1032.6,709.0 C1021.7,699.2 1005.4,683.2 1000.0,678.0 Z" fill="url(#gRLow)" />
<path d="M1117,757.8 L1146.7,743" fill="none" stroke="#6c2d33" stroke-width="2.5" stroke-linecap="round" opacity=".8" filter="url(#blur1)"/>
<path d="M1127,790.4 L1163,775.7" fill="none" stroke="#6c2d33" stroke-width="2" stroke-linecap="round" opacity=".7" filter="url(#blur1)"/>
<path d="M1163,803 L1145,881 C1147,887 1152,891 1158,894.3 L1207,923.6 L1256,949.7 C1272,957 1290,962 1305,962.8 C1322,964 1340,962 1353.8,959.5 C1372,955 1390,948 1402.7,940 C1414,933 1424,924 1428.8,917 C1434,908 1437,900 1437,890 L1426,812 L1414,800 Z" fill="url(#gDomeSide)" />
<path d="M1163.0,803.0 C1167.6,805.7 1178.0,812.8 1190.8,819.3 C1203.6,825.8 1223.4,834.9 1239.7,842.0 C1256.0,849.1 1272.3,857.9 1288.6,861.7 C1304.9,865.5 1322.3,866.6 1337.5,865.0 C1352.7,863.4 1367.5,857.5 1380.0,852.0 C1392.5,846.5 1404.9,838.5 1412.5,832.0 C1420.1,825.5 1425.0,820.3 1425.6,812.8 C1426.1,805.2 1422.3,795.4 1415.8,786.7 C1409.3,778.0 1399.5,770.4 1386.4,760.6 C1373.4,750.8 1349.9,735.6 1337.5,728.0 C1325.1,720.4 1317.4,717.5 1312.0,715.2 C1306.6,712.9 1306.2,714.4 1305.0,714.3 Z" fill="#723338" />
<g clip-path="url(#cpDome)">
<path d="M1163.5,806.0 C1168.1,808.7 1178.5,815.8 1191.3,822.3 C1204.1,828.8 1223.9,837.9 1240.2,845.0 C1256.5,852.1 1272.8,860.9 1289.1,864.7 C1305.4,868.5 1322.8,869.6 1338.0,868.0 C1353.2,866.4 1368.0,860.5 1380.5,855.0 C1393.0,849.5 1405.4,841.5 1413.0,835.0 C1420.6,828.5 1425.5,823.3 1426.1,815.8 C1426.6,808.2 1417.9,794.1 1416.3,789.7" fill="none" stroke="#91545c" stroke-width="9" opacity=".55" filter="url(#blur2)"/>
<path d="M1164.6,802 L1305,714.5" fill="none" stroke="#91545c" stroke-width="2" opacity=".8" filter="url(#blur1)"/>
</g>
<path d="M748,331 L750.5,376 C756,390 776,400.5 798,400.5 L812,400.5 L851,372 L849,331 Z" fill="url(#gBossSide)" />
<path d="M749,351 C760,368 790,376 812,372 L812,379 C790,383 760,375 749.3,358 Z" fill="#565863" />
<path d="M749.3,358 C760,375 790,383 812,379 L812,382.5 C790,386.5 760,378.5 749.5,361.5 Z" fill="#767883" />
<path d="M849.0,336.0 C852,345 858,349 865,348 C866.5,348 867,348 867.6,347.5 L950.5,280.0 C952.6,278.2 957.1,273.4 963.0,269.5 C968.9,265.6 978.3,261.2 986.0,256.8 C993.7,252.4 1002.3,246.3 1009.0,243.0 C1015.7,239.7 1021.1,238.1 1026.3,236.7 C1031.5,235.3 1035.2,234.8 1040.0,234.8 C1044.8,234.8 1049.6,235.5 1055.0,236.7 C1060.4,237.9 1064.8,239.0 1072.3,241.9 C1079.8,244.8 1090.5,249.2 1100.0,254.0 C1109.5,258.9 1120.0,264.7 1129.0,271.0 C1138.0,277.3 1146.3,284.3 1154.0,292.0 C1161.7,299.7 1168.7,308.7 1175.0,317.0 C1181.3,325.3 1186.3,333.8 1192.0,342.0 C1197.7,350.2 1203.7,359.3 1209.0,366.0 C1214.3,372.7 1220.5,378.3 1224.0,382.0 C1227.5,385.7 1229.0,387.0 1230.0,388.0 L1152.0,428.0 C1149.2,424.3 1140.7,413.7 1135.0,405.7 C1129.3,397.7 1124.3,389.5 1118.0,380.0 C1111.7,370.5 1105.8,357.4 1097.0,348.7 C1088.2,340.0 1078.7,334.5 1065.5,327.6 C1052.3,320.8 1025.9,310.9 1018.0,307.6 C1011.3,312.7 992.3,327.3 978.0,338.3 C963.7,349.3 947.3,362.9 932.0,373.6 C916.7,384.3 896.7,396.0 886.0,402.7 C875.3,409.4 873.5,411.8 868.0,414.0 C862.5,416.2 858.5,416.2 853.0,416.0 C847.5,415.8 840.5,414.2 835.0,412.5 C829.5,410.8 824.2,408.1 820.0,406.0 C815.8,403.9 811.7,401.0 810.0,400.0 L812,372 Z" fill="#5a5c67" />
<path d="M867.6,347.5 L950.5,280.0 C952.6,278.2 957.1,273.4 963.0,269.5 C968.9,265.6 982.2,258.9 986.0,256.8 L995.0,262.0 L989.5,275.0 L863.0,380.0 L868,350.6 Z" fill="url(#gAL)" />
<path d="M863.0,380.0 C884.1,362.5 968.4,292.5 989.5,275.0" fill="none" stroke="#71737e" stroke-width="1.2" opacity=".8"/>
<path d="M809.8,386.6 C813.1,388.4 823.1,395.2 829.7,397.4 C836.3,399.6 843.7,399.7 849.6,399.7 C855.5,399.7 861.7,398.4 865.0,397.4 C868.3,396.4 868.8,394.1 869.6,393.5 L1001.0,310.7 C1002.7,309.6 1008.0,306.1 1011.0,304.0 C1014.0,301.9 1016.2,299.7 1019.0,298.0 C1021.8,296.3 1024.9,294.1 1028.0,294.0 C1031.1,293.9 1033.3,295.3 1037.8,297.1 C1042.3,298.9 1048.3,301.5 1055.0,305.0 C1061.7,308.5 1069.2,313.4 1078.0,318.0 C1086.8,322.6 1100.8,327.4 1107.7,332.9 C1114.6,338.4 1114.8,343.2 1119.5,350.8 C1124.2,358.4 1128.9,366.7 1136.0,378.2 C1143.1,389.7 1157.7,413.0 1162.0,420.0 L1152.0,428.0 C1149.2,424.3 1140.7,413.7 1135.0,405.7 C1129.3,397.7 1124.3,389.5 1118.0,380.0 C1111.7,370.5 1105.8,357.4 1097.0,348.7 C1088.2,340.0 1078.7,334.5 1065.5,327.6 C1052.3,320.8 1025.9,310.9 1018.0,307.6 C1011.3,312.7 992.3,327.3 978.0,338.3 C963.7,349.3 947.3,362.9 932.0,373.6 C916.7,384.3 896.7,396.0 886.0,402.7 C875.3,409.4 873.5,411.8 868.0,414.0 C862.5,416.2 858.5,416.2 853.0,416.0 C847.5,415.8 840.5,414.2 835.0,412.5 C829.5,410.8 824.2,408.1 820.0,406.0 C815.8,403.9 811.7,401.0 810.0,400.0 Z" fill="url(#gD)" />
<path d="M986.0,256.8 C989.8,254.5 1002.3,246.3 1009.0,243.0 C1015.7,239.7 1021.1,238.1 1026.3,236.7 C1031.5,235.3 1035.2,234.8 1040.0,234.8 C1044.8,234.8 1049.6,235.5 1055.0,236.7 C1060.4,237.9 1064.8,239.0 1072.3,241.9 C1079.8,244.8 1090.5,249.2 1100.0,254.0 C1109.5,258.9 1120.0,264.7 1129.0,271.0 C1138.0,277.3 1146.3,284.3 1154.0,292.0 C1161.7,299.7 1168.7,308.7 1175.0,317.0 C1181.3,325.3 1186.3,333.8 1192.0,342.0 C1197.7,350.2 1203.7,359.3 1209.0,366.0 C1214.3,372.7 1220.5,378.3 1224.0,382.0 C1227.5,385.7 1229.0,387.0 1230.0,388.0 L1187.0,406.5 C1182.6,401.4 1168.4,386.3 1160.4,376.0 C1152.5,365.7 1146.4,354.7 1139.3,344.5 C1132.2,334.3 1124.5,322.7 1118.0,315.0 C1111.5,307.3 1106.7,303.6 1100.0,298.5 C1093.3,293.4 1085.5,288.5 1078.0,284.4 C1070.5,280.3 1062.7,277.6 1055.0,274.0 C1047.3,270.4 1037.7,265.7 1032.0,263.0 C1026.3,260.3 1024.4,259.4 1020.6,258.0 C1016.8,256.6 1013.8,255.1 1009.0,254.5 C1004.2,253.9 994.8,254.2 992.0,254.2 Z" fill="url(#gA)" />
<path d="M998.7,290.2 C1000.4,289.2 1005.4,285.6 1009.0,284.4 C1012.6,283.1 1016.8,282.8 1020.6,282.7 C1024.4,282.6 1028.2,283.0 1032.0,283.9 C1035.8,284.8 1037.8,285.5 1043.6,287.9 C1049.4,290.3 1059.4,294.9 1066.6,298.2 C1073.8,301.5 1079.8,303.9 1086.6,307.5 C1093.4,311.1 1101.1,314.0 1107.7,319.5 C1114.3,325.0 1119.6,331.6 1126.0,340.3 C1132.4,349.0 1138.3,359.6 1146.0,371.9 C1153.7,384.2 1167.7,407.0 1172.0,414.0 L1162.0,420.0 C1157.7,413.0 1143.1,389.7 1136.0,378.2 C1128.9,366.7 1124.2,358.4 1119.5,350.8 C1114.8,343.2 1114.6,338.4 1107.7,332.9 C1100.8,327.4 1086.8,322.6 1078.0,318.0 C1069.2,313.4 1061.7,308.5 1055.0,305.0 C1048.3,301.5 1043.5,299.4 1037.8,297.1 C1032.1,294.8 1027.1,292.5 1020.6,291.3 C1014.1,290.1 1002.4,290.4 998.7,290.2 Z" fill="url(#gC)" />
<path d="M812.8,356.0 C815.4,356.2 823.1,358.2 828.2,357.5 C833.3,356.8 839.7,354.3 843.5,352.0 C847.3,349.7 849.9,344.9 851.2,343.5 C853,346 858,349 865,348.3 L868.0,350.6 C867.2,351.8 865.9,354.8 863.4,357.5 C860.9,360.2 857.0,364.9 852.7,366.7 C848.4,368.5 843.5,369.0 837.4,368.2 C831.3,367.4 820.0,364.0 815.9,362.0 C811.8,360.0 813.3,357.0 812.8,356.0 Z" fill="url(#gNeck)" />
<path d="M809.8,380.5 C813.1,382.0 823.1,387.4 829.7,389.7 C836.3,392.0 843.2,393.8 849.6,394.3 C856.0,394.8 864.9,393.1 868.0,392.8 L869.6,393.5 C868.8,394.1 868.3,396.4 865.0,397.4 C861.7,398.4 855.5,399.7 849.6,399.7 C843.7,399.7 836.3,399.6 829.7,397.4 C823.1,395.2 813.1,388.4 809.8,386.6 Z" fill="url(#gNeck2)" />
<ellipse cx="798.3" cy="331.5" rx="50.6" ry="24.5" fill="#6a6c77"/>
<ellipse cx="798" cy="331.4" rx="25.7" ry="12.3" fill="url(#gHole)"/>
<path d="M1146,430.6 L1163.5,509 Q1165.8,518.7 1175,523.5 L1207,540 L1261,567 C1275,574 1288,579 1301,581.7 C1313,585 1325,586 1336,585.8 C1352,585 1368,582 1382,577.7 C1397,573 1411,566 1422,559 C1432,552 1441,542 1446,532 L1470,452 L1470.5,432.8 L1300,400 Z" fill="url(#gCupOut)" />
<path d="M1146.0,430.6 C1144.4,426.9 1146.5,424.9 1150.3,422.0 C1154.1,419.1 1156.8,420.2 1169.0,413.4 C1181.2,406.6 1203.9,392.1 1223.7,381.0 C1243.5,369.9 1272.8,353.8 1288.0,346.8 C1303.2,339.9 1305.9,340.0 1314.8,339.3 C1323.7,338.6 1328.2,338.0 1341.6,342.8 C1355.0,347.6 1379.3,360.2 1395.0,368.0 C1410.7,375.8 1424.8,382.6 1435.6,389.8 C1446.4,397.0 1453.9,403.8 1459.7,411.0 C1465.5,418.2 1469.0,426.0 1470.5,432.8 C1472.0,439.6 1470.8,446.2 1469.0,452.0 C1467.2,457.8 1465.3,461.9 1459.7,467.6 C1454.1,473.3 1446.4,480.6 1435.6,486.4 C1424.8,492.2 1408.4,498.7 1395.0,502.5 C1381.6,506.3 1368.4,508.1 1355.0,509.0 C1341.6,509.9 1330.5,510.4 1314.8,508.0 C1299.1,505.6 1279.0,500.8 1261.0,494.5 C1243.0,488.2 1223.8,478.4 1207.0,470.0 C1190.2,461.6 1170.2,450.6 1160.0,444.0 C1149.8,437.4 1147.6,434.3 1146.0,430.6 Z" fill="#6b6d78" />
<path d="M1149.0,430.6 C1149.7,429.1 1149.5,424.9 1153.3,422.1 C1157.1,419.3 1159.8,420.3 1172.0,413.7 C1184.2,407.1 1206.9,393.1 1226.3,382.5 C1245.8,371.8 1274.0,356.4 1288.7,349.7 C1303.4,343.0 1310.3,343.5 1314.6,342.3 L1314.8,434 L1229,478.4 L1209.8,468.8 C1202.0,464.7 1173.1,450.1 1163.0,443.7 C1152.9,437.3 1151.3,432.7 1149.0,430.6 Z" fill="url(#gInL)" />
<path d="M1314.6,342.3 C1318.9,342.8 1327.5,341.0 1340.5,345.6 C1353.5,350.2 1377.2,362.2 1392.5,369.7 C1407.9,377.2 1422.0,383.7 1432.7,390.7 C1443.4,397.6 1450.9,404.3 1456.7,411.3 C1462.5,418.3 1465.9,426.0 1467.5,432.7 C1469.1,439.4 1467.8,445.9 1466.0,451.6 C1464.2,457.2 1462.3,461.2 1456.8,466.8 C1451.3,472.4 1436.9,482.1 1432.9,485.2 L1419.5,483.8 L1314.8,434 Z" fill="url(#gInR)" />
<path d="M1229.0,478.4 L1314.8,434 L1419.5,483.8 L1432.9,485.2 C1426.2,487.7 1406.0,497.0 1392.7,500.5 C1379.5,504.1 1366.5,505.7 1353.5,506.4 C1340.5,507.1 1329.7,507.4 1314.5,505.0 C1299.4,502.6 1280.2,498.1 1262.7,492.1 C1245.3,486.0 1218.6,472.7 1209.8,468.8 Z" fill="url(#gFloor)" />
<path d="M1229,478.4 L1314.8,434" fill="none" stroke="#c0c1c9" stroke-width="4.2" stroke-linecap="round" opacity=".95" filter="url(#blur0)"/>
<path d="M1314.8,434 L1419.5,483.8" fill="none" stroke="#a2a4ad" stroke-width="3.4" stroke-linecap="round" opacity=".9" filter="url(#blur0)"/>

<g font-family="'Liberation Sans',sans-serif" font-size="8" font-weight="bold">
<path d="M378.8,947 L366,939.5" stroke="#2fbf4f" stroke-width="2.2"/><path d="M365,939 L372.4,939.6 L369,945 Z" fill="#1fae3f"/>
<path d="M378.8,947 L386.7,941" stroke="#ff9a9a" stroke-width="2.2"/><path d="M388,940 L384,940.6 L386.6,944 Z" fill="#ffb0b0"/>
<path d="M378.8,930.5 L382,938.5 L380,938.5 L380,947 L377.6,947 L377.6,938.5 L375.6,938.5 Z" fill="url(#gZ)"/>
<path d="M375.8,947 L378.8,950.4 L381.8,947 L378.8,944.6 Z" fill="#ffffff"/>
<text x="376.6" y="925" fill="#2222ff">Z</text><text x="357.6" y="937" fill="#22ee22">Y</text><text x="397.6" y="937" fill="#e01818">X</text>
</g>
</svg>

<div style="position:absolute;left:341px;top:208px;width:1577px;height:1px;background:#6a7a6e;"></div>
<div style="position:absolute;left:341px;top:208px;width:1px;height:776px;background:#6a7a6e;"></div>
<div style="position:absolute;left:1918px;top:208px;width:2px;height:777px;background:#ffffff;"></div>
<div style="position:absolute;left:342px;top:983px;width:1578px;height:2px;background:#ffffff;"></div>
<svg width="0" height="0" style="position:absolute"><defs>
<linearGradient id="yel" x1="0" y1="0" x2="1" y2="1"><stop offset="0" stop-color="#fff06a"/><stop offset=".5" stop-color="#ffe11e"/><stop offset="1" stop-color="#e8bf00"/></linearGradient>
<linearGradient id="yelv" x1="0" y1="0" x2="0" y2="1"><stop offset="0" stop-color="#fff58a"/><stop offset=".4" stop-color="#ffe21e"/><stop offset="1" stop-color="#e6bc00"/></linearGradient>
<linearGradient id="yeld" x1="0" y1="0" x2="0" y2="1"><stop offset="0" stop-color="#f0cf10"/><stop offset="1" stop-color="#c99d00"/></linearGradient>
<linearGradient id="blu" x1="0" y1="0" x2="1" y2="1"><stop offset="0" stop-color="#e4eefa"/><stop offset=".5" stop-color="#a9c4e6"/><stop offset="1" stop-color="#6d8fc0"/></linearGradient>
<linearGradient id="bluv" x1="0" y1="0" x2="0" y2="1"><stop offset="0" stop-color="#8fb8e2"/><stop offset="1" stop-color="#e2eef9"/></linearGradient>
<linearGradient id="bluh" x1="0" y1="0" x2="1" y2="0"><stop offset="0" stop-color="#e8f1fb"/><stop offset=".45" stop-color="#7d9fcc"/><stop offset=".7" stop-color="#a8c3e4"/><stop offset="1" stop-color="#5f83b6"/></linearGradient>
<linearGradient id="cube" x1="0" y1="0" x2="1" y2="1"><stop offset="0" stop-color="#5b8fcf"/><stop offset="1" stop-color="#2f5f9f"/></linearGradient>
<linearGradient id="gry" x1="0" y1="0" x2="1" y2="1"><stop offset="0" stop-color="#d8d8d8"/><stop offset="1" stop-color="#a8a8a8"/></linearGradient>
</defs></svg>
<svg style="position:absolute;left:16px;top:64px;" width="33" height="32" viewBox="0 0 33 32">
<path d="M0.5,6 L6,0.5 L21.5,8 L21.5,26.5 L15,31.5 L0.5,31.5 Z" fill="#151515"/>
<path d="M2,8 L14,14 L14,30 L2,30 Z" fill="url(#yelv)"/>
<path d="M15.3,14.5 L20.3,10 L20.3,26 L15.3,29.8Z" fill="url(#yeld)"/>
<path d="M2.6,6 L6.3,2 L19.8,8.6 L14.6,13 Z" fill="#f2f2f2"/>
<path d="M15,2 L31.5,19" stroke="#111" stroke-width="4.2"/>
<path d="M19,6.5 L21,8.5 M23.5,11 L25.5,13" stroke="#eee" stroke-width="1.3"/>
<path d="M9,3 l2,2 l-2,2 l-2,-2Z M13.5,9 l2.2,2.2 l-2.2,2.2 l-2.2,-2.2Z M22,0.5 l1.8,1.8 l-1.8,1.8 l-1.8,-1.8Z M5.5,2 l1.3,1.3 l-1.3,1.3 l-1.3,-1.3Z" fill="#333"/>
<path d="M27.3,31 L27.3,22" stroke="#ee1111" stroke-width="2.2"/>
<path d="M27.3,10 L27.3,6 M24,9.5 L27.3,3.5 L30.5,9.5" stroke="#ee1111" stroke-width="2" fill="none"/>
</svg>
<svg style="position:absolute;left:62px;top:64px;" width="33" height="32" viewBox="0 0 33 32">
<path d="M1.5,14 C1.5,9 8,6.5 16,6.5 C24,6.5 30.5,9 30.5,14 L30.5,25 L24,28.5 L24,27 C22,25.5 19,25 16,25 C13,25 10,25.5 8.5,27 L8.5,28.5 L1.5,25 Z" fill="#6d8ebf" stroke="#3c5f94" stroke-width="1"/>
<path d="M1.5,14 C1.5,9 8,6.5 16,6.5 C24,6.5 30.5,9 30.5,14 L24,17 C22,15 19,14 16,14 C13,14 10,15 8.5,17 Z" fill="#d4e3f4" stroke="#3c5f94" stroke-width=".8"/>
<path d="M8.5,17 C10,15 13,14 16,14 C19,14 22,15 24,17 L24,27 C22,25.5 19,25 16,25 C13,25 10,25.5 8.5,27 Z" fill="url(#bluh)"/>
<path d="M24,17 L30.5,14 L30.5,25 L24,28.5 Z" fill="url(#yel)" stroke="#3c5f94" stroke-width=".8"/>
<path d="M16,4 L16,31" stroke="#c01818" stroke-width="1.1" stroke-dasharray="4 1.5 1 1.5"/>
<path d="M30,5.5 C24,0.5 11,0 3,5.5" stroke="#b51010" stroke-width="1.3" fill="none"/>
<path d="M2,6.5 L6,1.5 M2,6.5 L8,6.5" stroke="#b51010" stroke-width="1.4" fill="none"/>
</svg>
<svg style="position:absolute;left:107px;top:64px;" width="33" height="32" viewBox="0 0 33 32">
<path d="M0.8,11.5 L9,1.6 L15.5,1.6 L11,7.8 L25.8,8.2 L30.8,12 L30.8,20 L20.8,30.4 L11.2,30.4 L11.2,26 L0.8,17.5 Z" fill="#86a5cf" stroke="#4a6c9e" stroke-width="1"/>
<path d="M0.8,11.5 L9,1.6 L15.5,1.6 L11,7.8 L25.8,8.2 L30.8,12 L21,20.8 L11.7,20.8 L16.4,14.7 L4,13.8 Z" fill="#c3d7ee" stroke="#4a6c9e" stroke-width=".8"/>
<path d="M0.8,11.5 L4,13.8 L16.4,14.7 L11.7,20.8 L11.2,26 L0.8,17.5 Z" fill="url(#blu)"/>
<path d="M9,1.6 L15.5,1.6 L11,7.8 L9,7 Z" fill="#7c9cc8"/>
<rect x="11.4" y="20.8" width="9.4" height="9.4" fill="url(#yel)" stroke="#4a6c9e" stroke-width=".9"/>
</svg>
<svg style="position:absolute;left:153.5px;top:64px;" width="32" height="32" viewBox="0 0 32 32">
<path d="M1.5,1 L29.5,1 Q30.8,1 30.8,2.5 L30.8,19.5 L22,27 L9,27 L0.5,19.5 L0.5,2.5 Q0.5,1 1.5,1 Z" fill="#5f80b0" stroke="#2d4f86" stroke-width="1"/>
<path d="M2.8,2.6 L28.4,2.6 L21.5,16 L9.8,16 Z" fill="url(#bluv)"/>
<circle cx="15.6" cy="23.3" r="7.2" fill="url(#yel)" stroke="#2d4f86" stroke-width="1"/>
</svg>
<svg style="position:absolute;left:328px;top:64px;" width="32" height="32" viewBox="0 0 32 32">
<path d="M28.6,2.4 L5,12 C0.5,17 2,24 6,27.5 C10,30 15,29.5 18,26 Z" fill="url(#blu)" stroke="#3b5e9a" stroke-width=".8"/>
<ellipse cx="10.3" cy="20.8" rx="7" ry="9.2" transform="rotate(-35 10.3 20.8)" fill="#a6c2e8" stroke="#3b5e9a" stroke-width=".7" opacity=".9"/>
<circle cx="28.6" cy="2.4" r="1.5" fill="#ee1111"/><circle cx="15.4" cy="15.2" r="1.5" fill="#ee1111"/><circle cx="2.3" cy="20.4" r="1.5" fill="#ee1111"/><circle cx="13.4" cy="29.3" r="1.5" fill="#ee1111"/>
</svg>
<svg style="position:absolute;left:408px;top:64px;" width="33" height="32" viewBox="0 0 33 32">
<path d="M0.6,8.6 L8.5,0.5 L22.5,0.5 C28,1.5 31.5,6 31.6,12 L31.6,24 L23.6,31.6 L0.6,31.6 Z" fill="#111"/>
<path d="M1.6,8.2 L9,1.5 L22,1.5 L14.2,8.6 Z" fill="#f6f8fb"/>
<path d="M14.5,8.6 L22.3,1.6 C27.5,2.5 30.5,6.5 30.6,12 L23.8,17.6 C23.5,12.5 20,9.2 14.5,8.6Z" fill="url(#bluh)"/>
<path d="M1.6,9.6 L14,9.6 C19.5,10 22.6,13.5 22.8,18.5 L22.8,30.6 L1.6,30.6 Z" fill="url(#yel)"/>
<path d="M24,19 L30.6,13.4 L30.6,23.6 L24,30 Z" fill="url(#yeld)"/>
</svg>
<svg style="position:absolute;left:454px;top:64px;" width="33" height="32" viewBox="0 0 33 32">
<path d="M0.4,12.5 L12,0.5 L23.8,0.5 L32,8.5 L32,31.6 L8,31.6 L0.4,23.6 Z" fill="#111"/>
<path d="M13,1.5 L23.4,1.5 L30.2,8.2 L18.4,8.2 Z" fill="#f6f8fb"/>
<path d="M1.6,12.6 L12.2,2 L18,8.6 L8.4,18.2 Z" fill="url(#bluh)"/>
<path d="M9,19.2 L18.4,9.4 L31,9.4 L31,30.6 L9,30.6 Z" fill="url(#yel)"/>
<path d="M1.4,14 L7.8,19.6 L7.8,29.8 L1.4,23.2 Z" fill="url(#yeld)"/>
</svg>
<svg style="position:absolute;left:814.5px;top:64px;" width="33" height="32" viewBox="0 0 33 32">
<path d="M12,7.5 L20,7.5 M7,12 L7,19" stroke="#111" stroke-width="2.2"/>
<rect x="0.7" y="0.7" width="12" height="12" fill="#a9bdea" stroke="#111" stroke-width="1.2"/>
<rect x="19.7" y="0.7" width="12" height="12" fill="url(#yel)" stroke="#111" stroke-width="1.2"/>
<rect x="0.7" y="18.7" width="12" height="12" fill="url(#yel)" stroke="#111" stroke-width="1.2"/>
<rect x="19.7" y="18.7" width="12" height="12" fill="url(#yel)" stroke="#111" stroke-width="1.2"/>
</svg>
<svg style="position:absolute;left:1188px;top:64px;" width="32" height="32" viewBox="0 0 32 32">
<path d="M1,1.5 L6,6.5 M23,24.5 L29,30" stroke="#333" stroke-width="1.8"/>
<path d="M15.9,1.8 L30,15.8 L15.9,29.8 L1.8,15.8 Z" fill="url(#yel)" stroke="#5a78d0" stroke-width=".9"/>
<path d="M11.5,11 L20.5,20" stroke="#3a2a2a" stroke-width="2.2"/>
</svg>
<svg style="position:absolute;left:1233px;top:64px;" width="28" height="32" viewBox="0 0 28 32">
<path d="M1,17.5 L7.5,11 L7.5,6.5 L12,2 L22,2 L22,9.5 L26,9.5 L26,20 L16.5,29.5 L1,29.5 Z" fill="#ffd400" stroke="#1040c8" stroke-width="1.2" stroke-linejoin="round"/>
<path d="M7.5,6.5 L17.5,6.5 L22,2 M17.5,6.5 L17.5,13.5 L7.5,13.5 M17.5,13.5 L22,9.5 M1,17.5 L16.5,17.5 L26,9.5 M16.5,17.5 L16.5,29.5" fill="none" stroke="#1040c8" stroke-width="1.1"/>
<path d="M17.5,6.5 L22,2 L22,9.5 L17.5,13.5Z M16.5,17.5 L26,9.5 L26,20 L16.5,29.5Z" fill="#e6b400" stroke="#1040c8" stroke-width="1"/>
</svg>
<svg style="position:absolute;left:1281px;top:65px;" width="32" height="32" viewBox="0 0 32 32"><path d="M29.3,13.2 L29.3,17.8 L25.1,18.3 L24.1,20.7 L26.8,24.0 L23.5,27.3 L20.2,24.6 L17.8,25.6 L17.3,29.8 L12.7,29.8 L12.2,25.6 L9.8,24.6 L6.5,27.3 L3.2,24.0 L5.9,20.7 L4.9,18.3 L0.7,17.8 L0.7,13.2 L4.9,12.7 L5.9,10.3 L3.2,7.0 L6.5,3.7 L9.8,6.4 L12.2,5.4 L12.7,1.2 L17.3,1.2 L17.8,5.4 L20.2,6.4 L23.5,3.7 L26.8,7.0 L24.1,10.3 L25.1,12.7 Z" fill="#c4c4c4" stroke="#9a9a9a" stroke-width="1"/><circle cx="15" cy="15.5" r="4.3" fill="#f1f1f1" stroke="#9a9a9a"/><path d="M17,8 A7,7 0 1 1 13,20" fill="none" stroke="#8e8e8e" stroke-width="2.4"/><path d="M22,4 L29,12 L20,13 Z" fill="#b0b0b0" stroke="#8e8e8e" stroke-width=".8"/></svg>
<svg style="position:absolute;left:1343px;top:65px;" width="32" height="32" viewBox="0 0 32 32"><path d="M29.3,13.2 L29.3,17.8 L25.1,18.3 L24.1,20.7 L26.8,24.0 L23.5,27.3 L20.2,24.6 L17.8,25.6 L17.3,29.8 L12.7,29.8 L12.2,25.6 L9.8,24.6 L6.5,27.3 L3.2,24.0 L5.9,20.7 L4.9,18.3 L0.7,17.8 L0.7,13.2 L4.9,12.7 L5.9,10.3 L3.2,7.0 L6.5,3.7 L9.8,6.4 L12.2,5.4 L12.7,1.2 L17.3,1.2 L17.8,5.4 L20.2,6.4 L23.5,3.7 L26.8,7.0 L24.1,10.3 L25.1,12.7 Z" fill="#c4c4c4" stroke="#9a9a9a" stroke-width="1"/><circle cx="15" cy="15.5" r="4.3" fill="#f1f1f1" stroke="#9a9a9a"/><circle cx="16" cy="16" r="5" fill="none" stroke="#8e8e8e" stroke-width="2"/><path d="M19,19 L28,28 M28,19 L19,28" stroke="#a0a0a0" stroke-width="2.6"/></svg>
<svg style="position:absolute;left:1408px;top:65px;" width="32" height="30" viewBox="0 0 32 30">
<path d="M2,1.5 L30,1.5 L28,8 L19,8 L19,19 L29,19 L29,26 L1,26 L1,19 L12,19 L12,8 L1,8 Z" fill="#e4e4e4" stroke="#aaaaaa" stroke-width="1.2"/>
<path d="M12,8 L19,8 M12,19 L19,19" stroke="#c4c4c4"/>
</svg>
<svg style="position:absolute;left:1473px;top:65px;" width="32" height="30" viewBox="0 0 32 30">
<path d="M3,9 L29,9 L29,21 L3,21 Z" fill="#ececec" stroke="#b5b5b5" stroke-width="1.1"/>
<path d="M3,9 L17,9 L3,21 Z" fill="#c9c9c9"/>
<path d="M1,24 L29,1" stroke="#bcbcbc" stroke-width="1.4"/>
</svg>
<svg style="position:absolute;left:193px;top:64px;" width="16" height="16" viewBox="0 0 16 16">
<rect x="2" y="0.6" width="11.5" height="14.8" rx="1" fill="#cfe0f5" stroke="#3b4f7a" stroke-width="1"/>
<path d="M5,0.8 L5,15 M9,0.8 L9,15" stroke="#f4f8fd" stroke-width="1.6"/>
<path d="M0.8,5.2 L14.8,2.8 M0.8,8.7 L14.8,6.3 M0.8,12.2 L14.8,9.8" stroke="#3b4f6a" stroke-width="1.2"/>
</svg>
<svg style="position:absolute;left:193px;top:86px;" width="16" height="16" viewBox="0 0 16 16">
<path d="M0.6,8.5 L9.5,1.2 L15.3,4.8 L15.3,8.8 L7.8,15 L0.6,11.8 Z" fill="#ffe11e" stroke="#26304f" stroke-width="1"/>
<path d="M1.6,8.3 L9.6,2 L14.4,5 L7.6,10.8 Z" fill="#7d96c4"/>
<path d="M7.6,11 L7.6,14.6" stroke="#26304f" stroke-width=".9"/>
</svg>
<svg style="position:absolute;left:193px;top:108px;" width="16" height="16" viewBox="0 0 16 16">
<path d="M0.6,4 L6,0.8 L15.4,2.6 L15.4,11.4 L10,15.4 L0.6,13.4 Z" fill="#ffe11e" stroke="#333" stroke-width="1"/>
<path d="M10.3,5.6 L15,2.8 L15,11.2 L10.3,14.6Z" fill="#e2b800"/>
<path d="M1,4.2 L6,1.4 L14.6,2.9 L10,5.4Z" fill="#fff27a"/>
<ellipse cx="5.2" cy="9.6" rx="3.4" ry="3.6" fill="#1f5fb8" stroke="#0e2f66" stroke-width="1"/>
<ellipse cx="5.7" cy="9.9" rx="1.5" ry="1.7" fill="#0a1c3c"/>
</svg>
<svg style="position:absolute;left:499px;top:64px;" width="16" height="16" viewBox="0 0 16 16">
<path d="M0.6,15.4 L0.6,6 L5.5,0.6 L8.5,0.6 L14,10 L9.5,15.4 Z" fill="#151515"/>
<path d="M1.6,14.4 L1.6,6.6 L4,4 L8.6,14.4 Z" fill="#ffe11e"/>
<path d="M5,2.6 L7.8,1.6 L12.8,10 L9.6,13.8 Z" fill="#a9c4ec"/>
<path d="M4.6,3 L5.8,1.4 L7.6,1.4" fill="none" stroke="#f4f4f4" stroke-width="1"/>
<path d="M15.6,8.4 L11.6,1.2 M11,3.6 L11.4,0.8 L14,2" fill="none" stroke="#c01818" stroke-width="1.1"/>
</svg>
<svg style="position:absolute;left:499px;top:86px;" width="16" height="16" viewBox="0 0 16 16">
<path d="M0.5,4.5 L4.5,0.5 L15.5,0.5 L15.5,11 L11.5,15.5 L0.5,15.5 Z" fill="#151515"/>
<path d="M1.8,4.6 L5,1.6 L14,1.6 L11,4.6 Z" fill="#fafafa"/>
<path d="M12.2,5.2 L14.6,2.6 L14.6,10.6 L12.2,13.6 Z" fill="#f2cc00"/>
<rect x="1.6" y="5.6" width="9.6" height="8.8" fill="#3f78c8"/>
<rect x="3.2" y="7.2" width="6.4" height="5.6" fill="#1f3f7a" stroke="#9cc0f0" stroke-width=".8"/>
<rect x="6.4" y="7.6" width="2.4" height="2.4" fill="#f0f6ff"/>
</svg>
<svg style="position:absolute;left:499px;top:108px;" width="16" height="16" viewBox="0 0 16 16">
<circle cx="6.2" cy="9.6" r="5.6" fill="#ffd800" stroke="#1a2a66" stroke-width="1.2"/>
<rect x="4.6" y="0.8" width="10.6" height="8.4" fill="#ffd800" stroke="#1a2a66" stroke-width="1.2"/>
<path d="M5.2,3.8 L6.2,3.8 A5.6,5.6 0 0 1 11.6,8.6 L5.2,8.6 Z" fill="#a9bdea" stroke="#1a2a66" stroke-width="1"/>
</svg>
<svg style="position:absolute;left:583px;top:64px;" width="16" height="16" viewBox="0 0 16 16">
<path d="M0.5,5.5 L4,0.6 L15.5,0.6 L15.5,10.5 L12,15.5 L0.5,15.5 Z" fill="#151515"/>
<path d="M1.8,5 L4.6,1.6 L14.2,1.6 L11.6,5 Z" fill="#93a8e6"/>
<path d="M1.6,6 L11.4,6 L11.4,8.6 C9,10.5 6,6.8 1.6,9.6 Z" fill="#bcd0f0"/>
<path d="M12.4,5.6 L14.6,2.6 L14.6,6.4 L12.4,8.6Z" fill="#6f8cc0"/>
<path d="M1.6,11.2 C6,8.4 9,12.2 11.4,10.2 L11.4,14.4 L1.6,14.4 Z" fill="#ffe11e"/>
<path d="M12.4,10.4 L14.6,8 L14.6,10.6 L12.4,13.6Z" fill="#e2b800"/>
</svg>
<svg style="position:absolute;left:583px;top:86px;" width="16" height="16" viewBox="0 0 16 16">
<path d="M0.8,0.8 L9.2,0.8 L9.2,15 L0.8,15 Z" fill="#e2e2e2" stroke="#bdbdbd" stroke-width="1"/>
<path d="M9.2,1 L11.2,1 L15.4,15 L9.2,15 Z" fill="#d4d4d4" stroke="#c4c4c4" stroke-width=".8"/>
<path d="M4,11 L12,11 M10,9 L12.4,11 L10,13" fill="none" stroke="#b2b2b2" stroke-width="1"/>
</svg>
<svg style="position:absolute;left:583px;top:108px;" width="16" height="16" viewBox="0 0 16 16">
<path d="M0.8,3.6 L3.6,0.8 L9.8,0.8 L9.8,6.8 L7,9.6 L0.8,9.6 Z M0.8,3.6 L7,3.6 L9.8,0.8 M7,3.6 L7,9.6" fill="#ececec" stroke="#b5b5b5" stroke-width="1"/>
<path d="M8,8 L15,15 M15,8 L8,15" stroke="#b8b8b8" stroke-width="1.8"/>
</svg>
<svg style="position:absolute;left:726px;top:64px;" width="16" height="16" viewBox="0 0 16 16">
<path d="M0.6,15.4 L0.6,6.4 L6.4,0.6 L7.6,1.6 L7.6,4 L3.2,8.4 L3.2,12.6 L9.6,12.6 L13.4,9 L15.6,9.6 L15.6,11 L11,15.4 Z" fill="#f6ea00" stroke="#151515" stroke-width="1.1" stroke-linejoin="round"/>
<path d="M4.4,9 L7.6,4.4 L11.8,10.6 L9.4,11.6 L4.4,11.6 Z" fill="#7d93d6" stroke="#151515" stroke-width=".9"/>
<path d="M7.8,5.4 L11.4,10.4" stroke="#f2f2f2" stroke-width="1"/>
</svg>
<svg style="position:absolute;left:726px;top:86px;" width="16" height="16" viewBox="0 0 16 16">
<path d="M0.8,4.6 L7.4,0.6 L15.2,8.4 L11,12 Z" fill="#b9d0f2" stroke="#1a1a2a" stroke-width="1"/>
<path d="M3,3.6 L7,1.4 L10,4.2 L5.2,7 Z" fill="#86a6dc"/>
<path d="M9.4,4 L4.4,9" stroke="#e11" stroke-width="1.1" stroke-dasharray="2 1.2"/>
<path d="M9,8 L13,10.4 L10.6,12.4 Z" fill="#fafafa" stroke="#1a1a2a" stroke-width=".8"/>
<path d="M6,9 L14,14 M14,11 L7.4,14.4" stroke="#222" stroke-width="1.2"/>
<circle cx="7.4" cy="14.2" r="1.4" fill="#fff" stroke="#222" stroke-width="1"/><circle cx="13.6" cy="14.2" r="1.4" fill="#fff" stroke="#222" stroke-width="1"/>
</svg>
<svg style="position:absolute;left:726px;top:108px;" width="16" height="16" viewBox="0 0 16 16">
<path d="M0.6,0.6 L10.4,0.6 L15.4,5.6 L15.4,15.4 L0.6,15.4 Z" fill="#ffe11e" stroke="#151515" stroke-width="1.1"/>
<path d="M1.4,1.4 L10,1.4 L12,3.4 C6,4 2.6,8 1.4,12.4 Z" fill="#f8f8f8"/>
<path d="M4.4,4.4 C9,4.6 12.4,8 13,13" fill="none" stroke="#14306a" stroke-width="3"/>
<path d="M6.4,3.4 C10.4,4.4 13.4,7.4 14.2,11.4" fill="none" stroke="#5f8bd0" stroke-width="1"/>
<path d="M3,14.6 C4,11.4 6.4,9.6 9.4,9.2" fill="none" stroke="#fff6a0" stroke-width="1.4"/>
</svg>
<svg style="position:absolute;left:856px;top:64px;" width="16" height="16" viewBox="0 0 16 16">
<rect x="0.6" y="0.6" width="14.8" height="14.8" fill="#ffe452" stroke="#1c2440" stroke-width="1.2"/>
<rect x="0.6" y="7" width="8.4" height="8.4" fill="#a9b8ee" stroke="#1c2440" stroke-width="1.2"/>
<path d="M9,7 L9,15.4 M0.6,7 L9,7" stroke="#f6f6f6" stroke-width=".6" transform="translate(.9,-.9)"/>
</svg>
<svg style="position:absolute;left:856px;top:86px;" width="16" height="16" viewBox="0 0 16 16">
<path d="M0.8,3.8 L3,1.4 L10.4,1.4 L10.4,7.4 L8.4,9.4 L0.8,9.4 Z M0.8,3.8 L8.4,3.8 L10.4,1.4" fill="#e2e2e2" stroke="#b2b2b2" stroke-width="1"/>
<path d="M5.6,9.2 L7.8,6.8 L14.8,6.8 L14.8,13 L12.6,15.2 L5.6,15.2 Z M5.6,9.2 L12.6,9.2 L14.8,6.8 M12.6,9.2 L12.6,15.2" fill="#ececec" stroke="#b2b2b2" stroke-width="1"/>
<path d="M13.4,0.6 L13.4,4.4 M11.5,2.5 L15.3,2.5" stroke="#c4c4c4" stroke-width="1"/>
</svg>
<svg style="position:absolute;left:856px;top:108px;" width="16" height="16" viewBox="0 0 16 16">
<path d="M5.6,2.4 L3.4,2.4 L3.4,6.6 L1,8.4 L1,12.4 L3.6,14.6 L5.6,14.6 Z" fill="#ffd800" stroke="#151515" stroke-width="1.2"/>
<path d="M10,2.4 L12.2,2.4 L12.2,6.6 L14.6,8.4 L14.6,12.4 L12,14.6 L10,14.6 Z" fill="#a9c4ec" stroke="#1430a0" stroke-width="1.2"/>
<path d="M7.8,0.2 L7.8,15.8" stroke="#e11" stroke-width="1.1"/>
</svg>
<svg style="position:absolute;left:977px;top:64px;" width="16" height="16" viewBox="0 0 16 16">
<path d="M0.8,3.4 L3,0.8 L9.4,0.8 L9.4,6.6 L7.2,9 L0.8,9 Z" fill="#a9c4ec" stroke="#1030c0" stroke-width="1.2" stroke-linejoin="round"/>
<rect x="1.2" y="3.4" width="5.6" height="5.4" fill="#ffdc1e" stroke="#1030c0" stroke-width="1"/>
<path d="M11.4,7.4 L11.4,15.4 M7.4,11.4 L15.4,11.4" stroke="#c82020" stroke-width="1"/>
<path d="M10.2,8.8 L11.4,7.2 L12.6,8.8 M10.2,14 L11.4,15.6 L12.6,14 M8.8,10.2 L7.2,11.4 L8.8,12.6 M14,10.2 L15.6,11.4 L14,12.6" fill="none" stroke="#c82020" stroke-width="1"/>
</svg>
<svg style="position:absolute;left:977px;top:86px;" width="16" height="16" viewBox="0 0 16 16">
<path d="M0.8,14.8 L4.6,10.4 L15.4,10.4 L11.6,14.8 Z" fill="#c9dcf6" stroke="#151515" stroke-width="1.2"/>
<path d="M0.8,5.6 L4.4,1.6 C7,0.2 9,2.8 15.4,1.8 L11.8,5.6 Z" fill="#ffd21e" stroke="#151515" stroke-width="1.2"/>
<path d="M4,3.6 C7,2 9,4.4 12.4,3.4" stroke="#fff19a" stroke-width="1" fill="none"/>
<path d="M7,6.2 L7,12" stroke="#c01818" stroke-width="2"/><path d="M4.4,8.6 L7,5.4 L9.6,8.6 Z" fill="#c01818"/></svg>
<svg style="position:absolute;left:977px;top:108px;" width="16" height="16" viewBox="0 0 16 16">
<path d="M0.8,14.8 L4.6,10.4 L15.4,10.4 L11.6,14.8 Z" fill="#c9dcf6" stroke="#151515" stroke-width="1.2"/>
<path d="M0.8,5.6 L4.4,1.6 C7,0.2 9,2.8 15.4,1.8 L11.8,5.6 Z" fill="#ffd21e" stroke="#151515" stroke-width="1.2"/>
<path d="M4,3.6 C7,2 9,4.4 12.4,3.4" stroke="#fff19a" stroke-width="1" fill="none"/>
<path d="M7.6,6 L7.6,11" stroke="#c01818" stroke-width="2"/><path d="M5,9.6 L7.6,13 L10.2,9.6 Z" fill="#c01818"/></svg>
<svg style="position:absolute;left:1064px;top:64px;" width="16" height="16" viewBox="0 0 16 16">
<path d="M0.6,6 L5,1 L11,1 L15.4,6 L15.4,11 L11.4,15.4 L0.6,15.4 Z" fill="#ffe11e" stroke="#1a1a3a" stroke-width="1.2" stroke-linejoin="round"/>
<path d="M1,6 L5,1.6 L11,1.6 L14.6,6 L10.6,7.4 Z" fill="#f4f4f4" stroke="#1a1a3a" stroke-width=".8"/>
<path d="M10.8,7.6 L15,6.4 L15,10.8 L11.2,15 Z" fill="#e2b800"/>
<path d="M10.8,7.4 L10.8,15" stroke="#1a1a3a" stroke-width=".9"/>
<path d="M7,0 L13,7 M14.6,0.4 L6.4,8" stroke="#e01020" stroke-width="1.6"/>
</svg>
<svg style="position:absolute;left:1064px;top:86px;" width="16" height="16" viewBox="0 0 16 16">
<path d="M1,4 L4,1.2 L12,1.2 L15,4 L15,12 L12,15 L4,15 L1,12 Z" fill="#ececec" stroke="#b8b8b8" stroke-width="1"/>
<path d="M1,4 L5,6 L11,6 L15,4 M5,6 L5,14.6 M11,6 L11,14.6" fill="none" stroke="#bcbcbc" stroke-width="1"/>
<path d="M6.6,7.6 L9.6,12.6 M9.6,7.6 L8.4,10.4" stroke="#b0b0b0" stroke-width="1.2"/>
</svg>
<svg style="position:absolute;left:1064px;top:108px;" width="16" height="16" viewBox="0 0 16 16">
<path d="M1,6.8 L6.6,1.6 L10.6,1.6 L15,6.8 L15,9.6 L9,14.6 L6.4,14.6 Z" fill="#f8f8f8" stroke="#1a1a2a" stroke-width="1"/>
<path d="M1.6,6.8 L6.8,2.2 L10.2,2.2 L12.6,5 L6.8,10.8 Z" fill="#8ea2e2"/>
<path d="M4.6,4.4 L8.6,8.8" stroke="#c8d4f4" stroke-width="2"/>
<path d="M1.6,15.4 L14.6,0.8" stroke="#e01020" stroke-width="1"/>
</svg>
<svg style="position:absolute;left:3px;top:4px;" width="14" height="15" viewBox="0 0 17 17"><rect x="0" y="0" width="17" height="17" fill="#e8dc9a"/><path d="M0,0 L17,0 L17,7 L9,13 L0,9 Z" fill="#2a2a2a"/><path d="M4,3 L14,1.5 L15,6 L7,9 Z" fill="#f4f4f4"/><path d="M1,9 L8,12 L15,8 L16,10 L8,15 L1,12Z" fill="#111"/><path d="M3,13 L9,16 L6,16.6 L2,15Z" fill="#fff"/></svg>
<svg style="position:absolute;left:29px;top:3px;" width="16" height="16" viewBox="0 0 16 16"><path d="M1.5,2.5 L10.5,2.5 L14.5,6 L14.5,14.5 L1.5,14.5 Z" fill="#f1f1f1" stroke="#c9ccd6" stroke-width="1"/><path d="M10.5,2.5 L10.5,6 L14.5,6" fill="#ffffff" stroke="#c9ccd6" stroke-width=".8"/></svg>
<svg style="position:absolute;left:53px;top:3px;" width="16" height="16" viewBox="0 0 16 16"><path d="M1.5,2.5 L10.5,2.5 L14.5,6 L14.5,14.5 L1.5,14.5 Z" fill="#f1f1f1" stroke="#c9ccd6" stroke-width="1"/><path d="M10.5,2.5 L10.5,6 L14.5,6" fill="#ffffff" stroke="#c9ccd6" stroke-width=".8"/><path d="M4,8 L7,11 L12,6 M5,10 L9,12 L12,10" stroke="#c01020" stroke-width="1.6" fill="none"/></svg>
<svg style="position:absolute;left:77px;top:3px;" width="16" height="16" viewBox="0 0 16 16"><path d="M1.5,2.5 L10.5,2.5 L14.5,6 L14.5,14.5 L1.5,14.5 Z" fill="#f1f1f1" stroke="#c9ccd6" stroke-width="1"/><path d="M10.5,2.5 L10.5,6 L14.5,6" fill="#ffffff" stroke="#c9ccd6" stroke-width=".8"/><path d="M4,5 L12,5 L12,7 L9.5,7 L9.5,10 L12,10 L12,12 L4,12 L4,10 L6.5,10 L6.5,7 L4,7 Z" fill="#a01018"/></svg>
<svg style="position:absolute;left:101px;top:3px;" width="16" height="16" viewBox="0 0 16 16"><path d="M1.5,2.5 L10.5,2.5 L14.5,6 L14.5,14.5 L1.5,14.5 Z" fill="#f1f1f1" stroke="#c9ccd6" stroke-width="1"/><path d="M10.5,2.5 L10.5,6 L14.5,6" fill="#ffffff" stroke="#c9ccd6" stroke-width=".8"/><path d="M4,5 L11,5 L11,7 L9,7 L9,10 L11,10 L11,12 L4,12 L4,10 L6,10 L6,7 L4,7 Z" fill="#a01018"/><path d="M8,9 L15,9 M8,11.5 L15,11.5 M8,14 L15,14" stroke="#111" stroke-width="1.3"/></svg>
<svg style="position:absolute;left:125px;top:3px;" width="16" height="16" viewBox="0 0 16 16"><path d="M1.5,2.5 L10.5,2.5 L14.5,6 L14.5,14.5 L1.5,14.5 Z" fill="#f1f1f1" stroke="#c9ccd6" stroke-width="1"/><path d="M10.5,2.5 L10.5,6 L14.5,6" fill="#ffffff" stroke="#c9ccd6" stroke-width=".8"/><circle cx="8" cy="9" r="3" fill="none" stroke="#2a9ad8" stroke-width="1.4"/><path d="M4,9 L12,9 M8,5 L8,13" stroke="#5ab4e8" stroke-width=".8"/><circle cx="8" cy="9" r="1" fill="#1a3a8a"/></svg>
<svg style="position:absolute;left:149px;top:3px;" width="18" height="16" viewBox="0 0 18 16"><path d="M1,4 L6,4 L7.5,5.5 L13,5.5 L13,14 L1,14 Z" fill="#d9b24a" stroke="#8a6a1a" stroke-width=".8"/><path d="M1,14 L4,8 L17,8 L13,14 Z" fill="#f4d878" stroke="#8a6a1a" stroke-width=".8"/></svg>
<svg style="position:absolute;left:174px;top:2px;" width="16" height="17" viewBox="0 0 16 17"><path d="M1,1 L14.5,1 L14.5,15.5 L1,15.5 Z" fill="#6c7280" stroke="#4a4f5c" stroke-width="1"/><rect x="3.5" y="1.5" width="8.5" height="5.5" fill="#f4f4f4"/><rect x="4" y="10" width="8" height="5" fill="#e4e4e4"/><rect x="5" y="11" width="2" height="3.4" fill="#555"/></svg>
<svg style="position:absolute;left:197px;top:2px;" width="18" height="17" viewBox="0 0 18 17"><path d="M1,4 L11,4 L11,16 L1,16 Z" fill="#6c7280" stroke="#4a4f5c" stroke-width="1"/><rect x="3" y="4.5" width="6" height="4" fill="#f4f4f4"/><rect x="3.4" y="11" width="6" height="4.4" fill="#e4e4e4"/><path d="M7,11 L15,2 L17,4 L9,13 L6.4,13.6 Z" fill="#f0c040" stroke="#6a4a1a" stroke-width=".7"/><path d="M14,3 L16,5" stroke="#d05030" stroke-width="1.4"/></svg>
<svg style="position:absolute;left:221px;top:1px;" width="18" height="19" viewBox="0 0 18 19"><path d="M1,9 L6,9 L7.5,10.5 L12,10.5 L12,18 L1,18 Z" fill="#e83020"/><path d="M2,18 L5,12 L16,11 L12,18 Z" fill="#f4d878" stroke="#b88a2a" stroke-width=".7"/><path d="M9,1 L12,4 M14,0.5 L14,4 M11,6 L16,8 M16,2 L17.5,5" stroke="#f4d820" stroke-width="1.4"/><path d="M10,3 L15,9" stroke="#3a5ad0" stroke-width="1.2"/></svg>
<svg style="position:absolute;left:245px;top:2px;" width="18" height="18" viewBox="0 0 18 18"><rect x="1" y="3" width="8" height="8" fill="#b9c8ee" stroke="#f4f4f4" stroke-width=".8"/><rect x="5" y="1" width="6" height="6" fill="#e8c030"/><path d="M12,6 L12,16 M7,11 L17,11" stroke="#d83020" stroke-width="2.2"/></svg>
<svg style="position:absolute;left:269px;top:2px;" width="18" height="18" viewBox="0 0 18 18"><path d="M1,1.5 L12,1.5 L16,5 L16,8 L1,8 Z" fill="#f4e030"/><path d="M12,1.5 L12,5 L16,5" fill="#d8d8d8"/><rect x="1" y="8" width="15" height="2.5" fill="#f4f4f4"/><rect x="3" y="10" width="7" height="7" fill="#8aa8d8" stroke="#d8e4f4" stroke-width=".8"/><path d="M10,12 L16,12 L14,10 M16,12 L14,14.4" stroke="#2a6ad0" stroke-width="1.4" fill="none"/></svg>
<svg style="position:absolute;left:293px;top:2px;" width="18" height="16" viewBox="0 0 18 16"><path d="M1,7 L8,1 L8,4.6 C13,4.6 16.5,7 16.5,13 L12.5,13 C12.5,10 11,9.2 8,9.2 L8,13 Z" fill="#f4f4f4" stroke="#555" stroke-width="1"/></svg>
<svg style="position:absolute;left:317px;top:2px;" width="18" height="16" viewBox="0 0 18 16"><path d="M17,7 L10,1 L10,4.6 C5,4.6 1.5,7 1.5,13 L5.5,13 C5.5,10 7,9.2 10,9.2 L10,13 Z" fill="#e8e8e8" stroke="#a8a8a8" stroke-width="1"/></svg>
<svg style="position:absolute;left:341px;top:1px;" width="18" height="18" viewBox="0 0 18 18"><path d="M9,1 L10.5,3 L15,5.5 L16.5,12 L13,16.5 L5,16.5 L1.5,12 L3,5.5 L7.5,3 Z" fill="#c4c4c4" stroke="#a4a4a4" stroke-width=".8"/><path d="M9,3 L9,9 L3,13 M9,9 L15,13" stroke="#d8d8d8" stroke-width="1" fill="none"/></svg>
<div style="position:absolute;left:363px;top:0px;width:22px;height:24px;background:#3462ad;"></div>
<svg style="position:absolute;left:365px;top:2px;" width="18" height="18" viewBox="0 0 18 18"><path d="M4,0.5 L4,7.5 M0.5,4 L7.5,4 M1.5,1.5 L6.5,6.5 M6.5,1.5 L1.5,6.5" stroke="#f4c820" stroke-width="1.1"/><path d="M11,3 L11,6 M11,6 L8,10 M11,6 L14,10 M8,10 L6,14 M8,10 L10,14 M14,10 L12,14 M14,10 L16,14" stroke="#7ab4e8" stroke-width="1" fill="none"/><g fill="#9ac8f0"><circle cx="11" cy="3" r="1.1"/><circle cx="8" cy="10" r="1.1"/><circle cx="14" cy="10" r="1.1"/><circle cx="6" cy="14.5" r="1.1"/><circle cx="10" cy="14.5" r="1.1"/><circle cx="12.4" cy="14.5" r="1.1"/><circle cx="16.4" cy="14.5" r="1.1"/></g></svg>
<svg style="position:absolute;left:389px;top:2px;" width="18" height="18" viewBox="0 0 18 18"><rect x="3.5" y="3.5" width="13" height="13" fill="#f4f4f4" stroke="#111" stroke-width="1.4"/><path d="M9,3.5 L9,16.5 M13.6,3.5 L13.6,16.5" stroke="#111" stroke-width="1.2"/><rect x="5" y="6" width="2.4" height="3" fill="#111"/><rect x="5" y="11.4" width="2.4" height="3" fill="#111"/><rect x="10.2" y="6" width="2.2" height="3" fill="#111"/><rect x="10.2" y="11.4" width="2.2" height="3" fill="#111"/><path d="M3.5,0 L3.5,7 M0,3.5 L7,3.5 M1,1 L6,6 M6,1 L1,6" stroke="#f4c820" stroke-width="1.1"/></svg>
<svg style="position:absolute;left:413px;top:2px;" width="18" height="18" viewBox="0 0 18 18"><rect x="1" y="1" width="15" height="15" fill="#f8f8f8" stroke="#c8c8c8" stroke-width=".8"/><rect x="1" y="1" width="15" height="2.6" fill="#555"/><rect x="3" y="6" width="2.6" height="2.6" fill="none" stroke="#444" stroke-width="1"/><rect x="3" y="11" width="2.6" height="2.6" fill="none" stroke="#444" stroke-width="1"/><path d="M7.5,7.3 L14,7.3 M7.5,12.3 L14,12.3" stroke="#444" stroke-width="1.3"/></svg>
<svg style="position:absolute;left:437px;top:2px;" width="18" height="18" viewBox="0 0 18 18"><path d="M1,1 L7,1 L7,10 L1,10 Z" fill="#e8e8e8" stroke="#555" stroke-width="1"/><path d="M4,3.6 L10.6,3.6 L10.6,13 L4,13 Z" fill="#ececec" stroke="#555" stroke-width="1"/><path d="M7.5,6.5 L12.5,6.5 L15,9 L15,16.5 L7.5,16.5 Z" fill="#e4e4e4" stroke="#555" stroke-width="1"/></svg>
<svg style="position:absolute;left:457px;top:10px;" width="7" height="4" viewBox="0 0 7 4"><path d="M0,0 L7,0 L3.5,4 Z" fill="#ffffff"/></svg>
<svg style="position:absolute;left:467px;top:6px;" width="8" height="9" viewBox="0 0 8 9"><path d="M0.5,1 L7.5,1" stroke="#fff" stroke-width="1.2"/><path d="M0.5,4 L7.5,4 L4,8 Z" fill="#fff"/></svg>
<svg style="position:absolute;left:1826px;top:12px;" width="8" height="3" viewBox="0 0 8 3"><rect x="0" y="0.5" width="7" height="2" fill="#fff"/></svg>
<svg style="position:absolute;left:1862px;top:7px;" width="11" height="11" viewBox="0 0 11 11"><rect x="0.7" y="3.2" width="6.6" height="6.6" fill="none" stroke="#fff" stroke-width="1.3"/><path d="M3,3 L3,0.8 L9.8,0.8 L9.8,7.6 L7.6,7.6" fill="none" stroke="#fff" stroke-width="1.3"/></svg>
<svg style="position:absolute;left:1897px;top:7px;" width="10" height="10" viewBox="0 0 10 10"><path d="M1,1 L9,9 M9,1 L1,9" stroke="#fff" stroke-width="1.6"/></svg>
<svg style="position:absolute;left:1819px;top:38px;" width="5" height="3" viewBox="0 0 5 3"><path d="M0,0 L5,0 L2.5,3 Z" fill="#ffffff"/></svg>
<svg style="position:absolute;left:1830px;top:32px;" width="14" height="15" viewBox="0 0 14 15"><circle cx="6.6" cy="7.4" r="6" fill="#f8f8f8" stroke="#fff" stroke-width=".6" stroke-dasharray="1.2 1"/><path d="M4.2,5.4 C4.2,2.6 9.2,2.6 9.2,5.4 C9.2,7.2 6.8,7.2 6.8,9.2" fill="none" stroke="#e01020" stroke-width="1.8"/><circle cx="6.8" cy="11.6" r="1.1" fill="#e01020"/></svg>
<svg style="position:absolute;left:1854px;top:38px;" width="5" height="3" viewBox="0 0 5 3"><path d="M0,0 L5,0 L2.5,3 Z" fill="#ffffff"/></svg>
<svg style="position:absolute;left:1868px;top:42px;" width="7" height="3" viewBox="0 0 7 3"><rect x="0" y="0" width="6" height="2" fill="#fff"/></svg>
<svg style="position:absolute;left:1886px;top:36px;" width="10" height="10" viewBox="0 0 10 10"><rect x="0.7" y="3" width="5.8" height="5.8" fill="none" stroke="#fff" stroke-width="1.3"/><path d="M2.8,3 L2.8,0.8 L8.8,0.8 L8.8,6.8 L6.6,6.8" fill="none" stroke="#fff" stroke-width="1.3"/></svg>
<svg style="position:absolute;left:1905px;top:37px;" width="9" height="9" viewBox="0 0 9 9"><path d="M0.8,0.8 L8.2,8.2 M8.2,0.8 L0.8,8.2" stroke="#fff" stroke-width="1.6"/></svg>
<svg style="position:absolute;left:4px;top:383px;" width="17" height="17" viewBox="0 0 17 17"><path d="M1,4 L8,4 M4.5,0.5 L4.5,7.5" stroke="#c8c8c8" stroke-width="1"/><rect x="5.5" y="3.5" width="9" height="9" fill="#c4c4c4" stroke="#b0b0b0"/><path d="M5.5,3.5 L7.5,1.5 L16,1.5 L16,10.5 L14.5,12.5" fill="none" stroke="#b8b8b8"/></svg>
<svg style="position:absolute;left:4px;top:404px;" width="17" height="17" viewBox="0 0 17 17"><rect x="5.5" y="1.5" width="10" height="10" fill="#e4e4e4" stroke="#b0b0b0"/><circle cx="7" cy="10" r="6" fill="#c4c4c4" stroke="#b0b0b0"/><path d="M5.5,4 L12.8,4 M5.5,11.5 L13,11.5" stroke="#b0b0b0" fill="none"/></svg>
<div style="position:absolute;left:4px;top:428px;width:20px;height:1px;background:#d8d8d8;"></div>
<svg style="position:absolute;left:4px;top:435px;" width="17" height="17" viewBox="0 0 17 17"><rect x="5.5" y="1.5" width="10" height="10" fill="#c4c4c4" stroke="#b0b0b0"/><circle cx="7" cy="10" r="6" fill="#c4c4c4" stroke="#b0b0b0"/></svg>
<svg style="position:absolute;left:4px;top:457px;" width="17" height="17" viewBox="0 0 17 17"><circle cx="7" cy="10" r="6" fill="#c4c4c4" stroke="#b0b0b0"/><rect x="5.5" y="1.5" width="10" height="10" fill="#d0d0d0" stroke="#b0b0b0"/><path d="M5.5,4.2 A6,6 0 0 1 12.8,11.5" fill="none" stroke="#a8a8a8"/></svg>
<svg style="position:absolute;left:4px;top:479px;" width="17" height="17" viewBox="0 0 17 17"><circle cx="7" cy="10" r="6" fill="#c4c4c4" stroke="#b0b0b0"/><rect x="5.5" y="1.5" width="10" height="10" fill="#f4f4f4" stroke="#b0b0b0"/></svg>
<div style="position:absolute;left:6px;top:373px;width:2px;height:2px;background:#b4b4b4;"></div>
<div style="position:absolute;left:10px;top:373px;width:2px;height:2px;background:#b4b4b4;"></div>
<div style="position:absolute;left:14px;top:373px;width:2px;height:2px;background:#b4b4b4;"></div>
<div style="position:absolute;left:18px;top:373px;width:2px;height:2px;background:#b4b4b4;"></div>
<svg style="position:absolute;left:7px;top:499px;" width="4" height="7" viewBox="0 0 4 7"><path d="M4,0 L4,7 L0,3.5 Z" fill="#9a9a9a"/></svg>
<div style="position:absolute;left:6px;top:514px;width:2px;height:2px;background:#b4b4b4;"></div>
<div style="position:absolute;left:10px;top:514px;width:2px;height:2px;background:#b4b4b4;"></div>
<div style="position:absolute;left:14px;top:514px;width:2px;height:2px;background:#b4b4b4;"></div>
<div style="position:absolute;left:18px;top:514px;width:2px;height:2px;background:#b4b4b4;"></div>
<svg style="position:absolute;left:5px;top:524px;" width="16" height="16" viewBox="0 0 16 16"><path d="M0.6,5 L5,0.6 L15.4,0.6 L11,5 Z" fill="#dbe8f6" stroke="#2a5a9a" stroke-width="1" stroke-linejoin="round"/><path d="M11,5 L15.4,0.6 L15.4,11 L11,15.4 Z" fill="#b9d0ec" stroke="#2a5a9a" stroke-width="1" stroke-linejoin="round"/><path d="M0.6,5 L11,5 L11,15.4 L0.6,15.4 Z" fill="#2f62a3" stroke="#2a5a9a" stroke-width="1" stroke-linejoin="round"/></svg>
<svg style="position:absolute;left:5px;top:546px;" width="16" height="16" viewBox="0 0 16 16"><path d="M0.6,5 L11,5 L11,15.4 L0.6,15.4 Z" fill="#f4f8fd" stroke="#2a5a9a" stroke-width="1" stroke-linejoin="round"/><path d="M11,5 L15.4,0.6 L15.4,11 L11,15.4 Z" fill="#b9d0ec" stroke="#2a5a9a" stroke-width="1" stroke-linejoin="round"/><path d="M0.6,5 L5,0.6 L15.4,0.6 L11,5 Z" fill="#2f62a3" stroke="#2a5a9a" stroke-width="1" stroke-linejoin="round"/><path d="M3,8 L8.6,8 L8.6,13" fill="none" stroke="#b9d0ec" stroke-width=".8"/></svg>
<svg style="position:absolute;left:5px;top:568px;" width="16" height="16" viewBox="0 0 16 16"><path d="M0.6,5 L11,5 L11,15.4 L0.6,15.4 Z" fill="#eef4fb" stroke="#2a5a9a" stroke-width="1" stroke-linejoin="round"/><path d="M0.6,5 L5,0.6 L15.4,0.6 L11,5 Z" fill="#dbe8f6" stroke="#2a5a9a" stroke-width="1" stroke-linejoin="round"/><path d="M11,5 L15.4,0.6 L15.4,11 L11,15.4 Z" fill="#c9dcf2" stroke="#2a5a9a" stroke-width="1" stroke-linejoin="round"/><path d="M5,0.6 L5,11 L15.4,11 M5,11 L0.6,15.4" fill="none" stroke="#8fb0d8" stroke-width=".8"/><path d="M0.6,5 L5,0.6 L5,11 L0.6,15.4 Z" fill="#2f62a3" stroke="#2a5a9a" stroke-width="1" stroke-linejoin="round"/></svg>
<svg style="position:absolute;left:5px;top:590px;" width="16" height="16" viewBox="0 0 16 16"><path d="M0.6,5 L11,5 L11,15.4 L0.6,15.4 Z" fill="#f4f8fd" stroke="#2a5a9a" stroke-width="1" stroke-linejoin="round"/><path d="M0.6,5 L5,0.6 L15.4,0.6 L11,5 Z" fill="#dbe8f6" stroke="#2a5a9a" stroke-width="1" stroke-linejoin="round"/><path d="M5,0.6 L5,11 L15.4,11 M5,11 L0.6,15.4" fill="none" stroke="#8fb0d8" stroke-width=".8"/><path d="M11,5 L15.4,0.6 L15.4,11 L11,15.4 Z" fill="#2f62a3" stroke="#2a5a9a" stroke-width="1" stroke-linejoin="round"/></svg>
<svg style="position:absolute;left:5px;top:612px;" width="16" height="16" viewBox="0 0 16 16"><path d="M0.6,5 L11,5 L11,15.4 L0.6,15.4 Z" fill="#eef4fb" stroke="#2a5a9a" stroke-width="1" stroke-linejoin="round"/><path d="M0.6,5 L5,0.6 L15.4,0.6 L11,5 Z" fill="#dbe8f6" stroke="#2a5a9a" stroke-width="1" stroke-linejoin="round"/><path d="M11,5 L15.4,0.6 L15.4,11 L11,15.4 Z" fill="#c9dcf2" stroke="#2a5a9a" stroke-width="1" stroke-linejoin="round"/><path d="M5,0.6 L15.4,0.6 L15.4,11 L5,11 Z" fill="#2f62a3" stroke="#2a5a9a" stroke-width="0.8" stroke-linejoin="round"/><path d="M0.6,5 L11,5 L11,15.4" fill="none" stroke="#2a5a9a" stroke-width="1"/><path d="M11,5 L15.4,0.6" stroke="#2a5a9a"/></svg>
<svg style="position:absolute;left:5px;top:634px;" width="16" height="16" viewBox="0 0 16 16"><path d="M0.6,5 L11,5 L11,15.4 L0.6,15.4 Z" fill="#eef4fb" stroke="#2a5a9a" stroke-width="1" stroke-linejoin="round"/><path d="M0.6,5 L5,0.6 L15.4,0.6 L11,5 Z" fill="#dbe8f6" stroke="#2a5a9a" stroke-width="1" stroke-linejoin="round"/><path d="M11,5 L15.4,0.6 L15.4,11 L11,15.4 Z" fill="#c9dcf2" stroke="#2a5a9a" stroke-width="1" stroke-linejoin="round"/><path d="M5,0.6 L5,11 L15.4,11 M5,11 L0.6,15.4" fill="none" stroke="#8fb0d8" stroke-width=".8"/><path d="M0.6,15.4 L5,11 L15.4,11 L11,15.4 Z" fill="#2f62a3" stroke="#2a5a9a" stroke-width="1" stroke-linejoin="round"/></svg>
<svg style="position:absolute;left:7px;top:657px;" width="14" height="15" viewBox="0 0 14 15"><path d="M1,3 L6,0.6 L12.4,2.6 L7.4,5.4 Z" fill="#3f72b3" stroke="#1f4f8f" stroke-width="1" stroke-linejoin="round"/><path d="M1,3 L7.4,5.4 L7.4,13.6 L1,10.4 Z" fill="#2f62a3" stroke="#1f4f8f" stroke-width="1" stroke-linejoin="round"/><path d="M7.4,5.4 L12.4,2.6 L12.4,11 L7.4,13.6 Z" fill="#5a8ac6" stroke="#1f4f8f" stroke-width="1" stroke-linejoin="round"/></svg>
<svg style="position:absolute;left:7px;top:679px;" width="14" height="15" viewBox="0 0 14 15"><path d="M1,3 L6,0.6 L12.4,2.6 L7.4,5.4 Z" fill="#ffffff" stroke="#1f4f8f" stroke-width="1" stroke-linejoin="round"/><path d="M1,3 L7.4,5.4 L7.4,13.6 L1,10.4 Z" fill="#ffffff" stroke="#1f4f8f" stroke-width="1" stroke-linejoin="round"/><path d="M7.4,5.4 L12.4,2.6 L12.4,11 L7.4,13.6 Z" fill="#4a7cbc" stroke="#1f4f8f" stroke-width="1" stroke-linejoin="round"/><path d="M3,5.4 L6,6.6 L6,11.4" fill="none" stroke="#1f4f8f" stroke-width=".8"/></svg>
<svg style="position:absolute;left:7px;top:701px;" width="14" height="15" viewBox="0 0 14 15"><path d="M1,3 L6,0.6 L12.4,2.6 L7.4,5.4 Z" fill="#ffffff" stroke="#1f4f8f" stroke-width="1" stroke-linejoin="round"/><path d="M1,3 L7.4,5.4 L7.4,13.6 L1,10.4 Z" fill="#3a6cac" stroke="#1f4f8f" stroke-width="1" stroke-linejoin="round"/><path d="M7.4,5.4 L12.4,2.6 L12.4,11 L7.4,13.6 Z" fill="#4a7cbc" stroke="#1f4f8f" stroke-width="1" stroke-linejoin="round"/></svg>
<svg style="position:absolute;left:7px;top:723px;" width="14" height="15" viewBox="0 0 14 15"><path d="M1,3 L6,0.6 L12.4,2.6 L7.4,5.4 Z" fill="#ffffff" stroke="#1f4f8f" stroke-width="1" stroke-linejoin="round"/><path d="M1,3 L7.4,5.4 L7.4,13.6 L1,10.4 Z" fill="#ffffff" stroke="#1f4f8f" stroke-width="1" stroke-linejoin="round"/><path d="M7.4,5.4 L12.4,2.6 L12.4,11 L7.4,13.6 Z" fill="#4a7cbc" stroke="#1f4f8f" stroke-width="1" stroke-linejoin="round"/><path d="M7.4,13.6 L1,10.4" stroke="#1f4f8f"/></svg>
<svg style="position:absolute;left:7px;top:742px;" width="4" height="7" viewBox="0 0 4 7"><path d="M4,0 L4,7 L0,3.5 Z" fill="#9a9a9a"/></svg>
<div style="position:absolute;left:6px;top:756px;width:2px;height:2px;background:#b4b4b4;"></div>
<div style="position:absolute;left:10px;top:756px;width:2px;height:2px;background:#b4b4b4;"></div>
<div style="position:absolute;left:14px;top:756px;width:2px;height:2px;background:#b4b4b4;"></div>
<div style="position:absolute;left:18px;top:756px;width:2px;height:2px;background:#b4b4b4;"></div>
<svg style="position:absolute;left:5px;top:766px;" width="17" height="17" viewBox="0 0 17 17"><path d="M2,3 L14,13" stroke="#222" stroke-width="1.1"/><path d="M0.8,5.6 L5,1.2 M11.2,15 L15.6,10.6" stroke="#222" stroke-width="1.2"/><path d="M2,3 L5,3.4 L3,5.6 Z M14,13 L11,12.6 L13,10.4Z" fill="#222"/></svg>
<svg style="position:absolute;left:5px;top:788px;" width="17" height="17" viewBox="0 0 17 17"><path d="M1,1 L1,8 M15.4,1 L15.4,8 M1,4.4 L15.4,4.4" stroke="#e01010" stroke-width="1.4"/><path d="M1.4,4.4 L4.4,2.4 L4.4,6.4 Z M15,4.4 L12,2.4 L12,6.4Z" fill="#e01010"/><ellipse cx="8.6" cy="11.6" rx="4.6" ry="3.4" fill="#e8f0fa" stroke="#8a8a8a" stroke-width=".8"/><ellipse cx="8.6" cy="11.6" rx="2.6" ry="2" fill="#2468d0"/></svg>
<svg style="position:absolute;left:5px;top:810px;" width="18" height="17" viewBox="0 0 18 17"><path d="M1,1 L8,1 M1,15.4 L8,15.4" stroke="#e01010" stroke-width="1.4"/><path d="M2.4,1 L2.4,15.4" stroke="#222" stroke-width="1.2"/><path d="M5.6,2 L5.6,14.4" stroke="#e01010" stroke-width="1.4"/><path d="M5.6,1.6 L3.8,4.6 L7.4,4.6 Z M5.6,14.8 L3.8,11.8 L7.4,11.8Z" fill="#e01010"/><ellipse cx="12.4" cy="8" rx="4.6" ry="3.4" fill="#e8f0fa" stroke="#8a8a8a" stroke-width=".8"/><ellipse cx="12.4" cy="8" rx="2.6" ry="2" fill="#2468d0"/></svg>
<svg style="position:absolute;left:5px;top:833px;" width="17" height="16" viewBox="0 0 17 16"><path d="M0.6,14.6 L16,14.6 M0.6,14.6 L12,1.6" stroke="#222" stroke-width="1.2" fill="none"/><path d="M10,5 C12.6,7.6 13.6,10.6 13.6,13.6" fill="none" stroke="#222" stroke-width="1"/><path d="M9.4,4.4 L12,5.2 L10.2,7 Z M13.6,14.4 L12.2,11.8 L15,11.8Z" fill="#222"/></svg>
<svg style="position:absolute;left:5px;top:855px;" width="17" height="17" viewBox="0 0 17 17"><circle cx="8.4" cy="8.4" r="7.2" fill="#f4f4f4" stroke="#222" stroke-width="1.1"/><path d="M8.4,8.4 L4,4" stroke="#222" stroke-width="1"/><path d="M3.4,3.4 L6.4,4.2 L4.2,6.4Z" fill="#222"/></svg>
<svg style="position:absolute;left:5px;top:877px;" width="17" height="17" viewBox="0 0 17 17"><circle cx="8.4" cy="8.4" r="7.2" fill="#f4f4f4" stroke="#222" stroke-width="1.1"/><path d="M3.6,3.6 L13.2,13.2" stroke="#222" stroke-width="1"/><path d="M3.2,3.2 L6.2,4 L4,6.2Z M13.6,13.6 L10.6,12.8 L12.8,10.6Z" fill="#222"/></svg>
<div style="position:absolute;left:4px;top:901px;width:20px;height:1px;background:#d8d8d8;"></div>
<svg style="position:absolute;left:5px;top:906px;" width="17" height="18" viewBox="0 0 17 18"><path d="M1.6,16 C1.6,9 4,7.6 9,7.6" fill="none" stroke="#1f4fa0" stroke-width="1.6"/><path d="M0,13 L1.6,17.4 L4,13.4Z" fill="#1f4fa0"/><text x="9.4" y="8.4" font-family="'Liberation Sans',sans-serif" font-size="9" font-weight="bold" fill="#1f4fa0">A</text></svg>
<svg style="position:absolute;left:8px;top:927px;" width="10" height="19" viewBox="0 0 10 19"><path d="M0.5,1 L9.5,1 M0.5,3.5 L9.5,3.5 M0.5,6 L9.5,6" stroke="#333" stroke-width="1.4"/><rect x="0.5" y="8" width="9" height="11" fill="#555"/><rect x="2.4" y="8" width="2" height="11" fill="#888"/></svg>
<svg style="position:absolute;left:7px;top:949px;" width="4" height="7" viewBox="0 0 4 7"><path d="M4,0 L4,7 L0,3.5 Z" fill="#9a9a9a"/></svg>
<svg style="position:absolute;left:69px;top:309px;" width="16" height="16" viewBox="0 0 16 16"><g transform="scale(1.14,1)"><path d="M0.6,3.6 L3.4,0.6 L9.6,0.6 L9.6,12 L7,15 L0.6,15 Z" fill="#111"/><path d="M1.6,4.6 L6,4.6 L6,14 L1.6,14 Z" fill="#ffe11e"/><path d="M1.8,3.6 L3.8,1.6 L8.4,1.6 L6.4,3.6 Z" fill="#ffe11e"/><path d="M7,4.4 L8.6,2.6 L8.6,11.6 L7,13.6 Z" fill="#e2b800"/></g><path d="M13.4,15.4 L13.4,2" stroke="#e01010" stroke-width="1.2"/><path d="M13.4,0 L11.4,3.6 L15.4,3.6 Z" fill="#e01010"/></svg>
<svg style="position:absolute;left:69px;top:327px;" width="16" height="16" viewBox="0 0 16 16"><path d="M0.6,5 L4.4,0.6 L10.6,0.6 C13.6,1.2 15.4,3.4 15.4,6 L15.4,11.4 L11.4,15.4 L0.6,15.4 Z" fill="#111"/><path d="M1.6,4.6 L4.8,1.6 L10,1.6 L7,4.6 Z" fill="#f6f8fb"/><path d="M7.4,4.6 L10.4,1.6 C13,2.2 14.4,4 14.4,6.4 L11.6,9 C11.4,6.4 10,5 7.4,4.6Z" fill="#7d9fcc"/><path d="M1.6,5.6 L7,5.6 C9.6,6 10.6,7.6 10.6,10 L10.6,14.4 L1.6,14.4 Z" fill="#ffe11e"/><path d="M11.6,10.4 L14.4,7.6 L14.4,11 L11.6,13.8Z" fill="#e2b800"/></svg>
<svg style="position:absolute;left:69px;top:345px;" width="16" height="16" viewBox="0 0 16 16"><path d="M0.5,4.5 L4.5,0.5 L15.5,0.5 L15.5,11 L11.5,15.5 L0.5,15.5 Z" fill="#151515"/><path d="M1.8,4.6 L5,1.6 L14,1.6 L11,4.6 Z" fill="#fafafa"/><path d="M12.2,5.2 L14.6,2.6 L14.6,10.6 L12.2,13.6 Z" fill="#f2cc00"/><rect x="1.6" y="5.6" width="9.6" height="8.8" fill="#3f78c8"/><rect x="3.2" y="7.2" width="6.4" height="5.6" fill="#1f3f7a" stroke="#9cc0f0" stroke-width=".8"/><rect x="6.4" y="7.6" width="2.4" height="2.4" fill="#f0f6ff"/></svg>
<svg style="position:absolute;left:69px;top:363px;" width="16" height="16" viewBox="0 0 16 16"><g transform="scale(1.14,1)"><path d="M0.6,3.6 L3.4,0.6 L9.6,0.6 L9.6,12 L7,15 L0.6,15 Z" fill="#111"/><path d="M1.6,4.6 L6,4.6 L6,14 L1.6,14 Z" fill="#ffe11e"/><path d="M1.8,3.6 L3.8,1.6 L8.4,1.6 L6.4,3.6 Z" fill="#ffe11e"/><path d="M7,4.4 L8.6,2.6 L8.6,11.6 L7,13.6 Z" fill="#e2b800"/></g><path d="M13.4,15.4 L13.4,2" stroke="#e01010" stroke-width="1.2"/><path d="M13.4,0 L11.4,3.6 L15.4,3.6 Z" fill="#e01010"/></svg>
<svg style="position:absolute;left:69px;top:381px;" width="16" height="16" viewBox="0 0 16 16"><g transform="scale(1.14,1)"><path d="M0.6,3.6 L3.4,0.6 L9.6,0.6 L9.6,12 L7,15 L0.6,15 Z" fill="#111"/><path d="M1.6,4.6 L6,4.6 L6,14 L1.6,14 Z" fill="#ffffff"/><path d="M1.8,3.6 L3.8,1.6 L8.4,1.6 L6.4,3.6 Z" fill="#ffe11e"/><path d="M7,4.4 L8.6,2.6 L8.6,11.6 L7,13.6 Z" fill="#f4f4f4"/><rect x="1.2" y="9" width="4.8" height="5" fill="#e8f4e0" stroke="#2a7a2a" stroke-width=".7"/><path d="M2.2,13 L5,10 M2.8,9.8 L5.2,9.8 L5.2,12.2" stroke="#18a018" stroke-width="1.1" fill="none"/></g><path d="M13.4,15.4 L13.4,2" stroke="#e01010" stroke-width="1.2"/><path d="M13.4,0 L11.4,3.6 L15.4,3.6 Z" fill="#e01010"/></svg>
<svg style="position:absolute;left:69px;top:399px;" width="16" height="16" viewBox="0 0 16 16"><g transform="scale(1.14,1)"><path d="M0.6,3.6 L3.4,0.6 L9.6,0.6 L9.6,12 L7,15 L0.6,15 Z" fill="#111"/><path d="M1.6,4.6 L6,4.6 L6,14 L1.6,14 Z" fill="#ffffff"/><path d="M1.8,3.6 L3.8,1.6 L8.4,1.6 L6.4,3.6 Z" fill="#ffe11e"/><path d="M7,4.4 L8.6,2.6 L8.6,11.6 L7,13.6 Z" fill="#f4f4f4"/><rect x="1.2" y="9" width="4.8" height="5" fill="#e8f4e0" stroke="#2a7a2a" stroke-width=".7"/><path d="M2.2,13 L5,10 M2.8,9.8 L5.2,9.8 L5.2,12.2" stroke="#18a018" stroke-width="1.1" fill="none"/></g><path d="M13.4,15.4 L13.4,2" stroke="#e01010" stroke-width="1.2"/><path d="M13.4,0 L11.4,3.6 L15.4,3.6 Z" fill="#e01010"/></svg>
<svg style="position:absolute;left:69px;top:417px;" width="16" height="16" viewBox="0 0 16 16"><g transform="scale(1.14,1)"><path d="M0.6,3.6 L3.4,0.6 L9.6,0.6 L9.6,12 L7,15 L0.6,15 Z" fill="#111"/><path d="M1.6,4.6 L6,4.6 L6,14 L1.6,14 Z" fill="#ffe11e"/><path d="M1.8,3.6 L3.8,1.6 L8.4,1.6 L6.4,3.6 Z" fill="#4f86d0"/><path d="M7,4.4 L8.6,2.6 L8.6,11.6 L7,13.6 Z" fill="#e2b800"/><rect x="1.2" y="9" width="4.8" height="5" fill="#e8f4e0" stroke="#2a7a2a" stroke-width=".7"/><path d="M2.2,13 L5,10 M2.8,9.8 L5.2,9.8 L5.2,12.2" stroke="#18a018" stroke-width="1.1" fill="none"/></g><path d="M13.4,15.4 L13.4,2" stroke="#e01010" stroke-width="1.2"/><path d="M13.4,0 L11.4,3.6 L15.4,3.6 Z" fill="#e01010"/></svg>
<svg style="position:absolute;left:69px;top:435px;" width="16" height="16" viewBox="0 0 16 16"><g transform="scale(1.14,1)"><path d="M0.6,3.6 L3.4,0.6 L9.6,0.6 L9.6,12 L7,15 L0.6,15 Z" fill="#111"/><path d="M1.6,4.6 L6,4.6 L6,14 L1.6,14 Z" fill="#ffe11e"/><path d="M1.8,3.6 L3.8,1.6 L8.4,1.6 L6.4,3.6 Z" fill="#4f86d0"/><path d="M7,4.4 L8.6,2.6 L8.6,11.6 L7,13.6 Z" fill="#e2b800"/><rect x="1.2" y="9" width="4.8" height="5" fill="#e8f4e0" stroke="#2a7a2a" stroke-width=".7"/><path d="M2.2,13 L5,10 M2.8,9.8 L5.2,9.8 L5.2,12.2" stroke="#18a018" stroke-width="1.1" fill="none"/></g><path d="M13.4,15.4 L13.4,2" stroke="#e01010" stroke-width="1.2"/><path d="M13.4,0 L11.4,3.6 L15.4,3.6 Z" fill="#e01010"/></svg>
<svg style="position:absolute;left:69px;top:453px;" width="16" height="16" viewBox="0 0 16 16"><g transform="scale(1.14,1)"><path d="M0.6,3.6 L3.4,0.6 L9.6,0.6 L9.6,12 L7,15 L0.6,15 Z" fill="#111"/><path d="M1.6,4.6 L6,4.6 L6,14 L1.6,14 Z" fill="#ffe11e"/><path d="M1.8,3.6 L3.8,1.6 L8.4,1.6 L6.4,3.6 Z" fill="#4f86d0"/><path d="M7,4.4 L8.6,2.6 L8.6,11.6 L7,13.6 Z" fill="#e2b800"/></g><path d="M13.4,15.4 L13.4,2" stroke="#e01010" stroke-width="1.2"/><path d="M13.4,0 L11.4,3.6 L15.4,3.6 Z" fill="#e01010"/></svg>
<svg style="position:absolute;left:69px;top:471px;" width="16" height="16" viewBox="0 0 16 16"><g transform="scale(1.14,1)"><path d="M0.6,3.6 L3.4,0.6 L9.6,0.6 L9.6,12 L7,15 L0.6,15 Z" fill="#111"/><path d="M1.6,4.6 L6,4.6 L6,14 L1.6,14 Z" fill="#ffffff"/><path d="M1.8,3.6 L3.8,1.6 L8.4,1.6 L6.4,3.6 Z" fill="#ffe11e"/><path d="M7,4.4 L8.6,2.6 L8.6,11.6 L7,13.6 Z" fill="#f4f4f4"/></g><path d="M13.4,15.4 L13.4,2" stroke="#e01010" stroke-width="1.2"/><path d="M13.4,0 L11.4,3.6 L15.4,3.6 Z" fill="#e01010"/></svg>
<svg style="position:absolute;left:31px;top:256px;" width="16" height="15" viewBox="0 0 16 15"><path d="M1,3 L6,6 L6,9 L1,8 Z M15,2 L10,6 L10,9 L15,6Z M2,11 L8,13 L14,9 L15,11 L8,15 L2,13Z" fill="#e01010"/><path d="M5.6,5.6 L10.4,5.6 L10.4,10.4 L5.6,10.4 Z" fill="#8a0808"/><path d="M5,1 L5.6,1.6 M8,0.4 L8,1.2 M11,1 L10.4,1.6 M8.4,3 L8.4,3.8" stroke="#222" stroke-width="1"/></svg>
<svg style="position:absolute;left:50px;top:274px;" width="16" height="15" viewBox="0 0 16 15"><path d="M6.6,1 L6.6,9.4 L14.6,9.4 M6.6,9.4 L1.6,13.6" fill="none" stroke="#3a3a3a" stroke-width="1.5"/><path d="M6.6,0 L4.4,3.4 L8.8,3.4 Z M15.6,9.4 L12.4,7.2 L12.4,11.6 Z M0.6,14.4 L1.6,10.8 L4.4,13.6Z" fill="#3a3a3a"/></svg>
<svg style="position:absolute;left:50px;top:291px;" width="16" height="15" viewBox="0 0 16 15"><path d="M0.6,9 L4,5.6 L4,3 L7,0.6 L12.4,0.6 L12.4,4 L15.4,4 L15.4,9 L10.4,14.4 L0.6,14.4 Z" fill="#2a7adc" stroke="#0e3e90" stroke-width="1" stroke-linejoin="round"/><path d="M4,3 L9.4,3 L12.4,0.6 M9.4,3 L9.4,6 M0.6,9 L10.4,9 L15.4,4 M10.4,9 L10.4,14.4" fill="none" stroke="#0e3e90" stroke-width=".9"/><path d="M4.6,3.6 L9,3.6 L9,5.6 L4.6,5.6Z M1.2,9.6 L9.8,9.6 L9.8,13.8 L1.2,13.8Z" fill="#4a9af0"/></svg>
<svg style="position:absolute;left:49px;top:489px;" width="18" height="16" viewBox="0 0 18 16"><circle cx="5" cy="3.6" r="3" fill="#111"/><circle cx="11" cy="3.6" r="3" fill="#111"/><circle cx="5" cy="3.6" r="1.2" fill="#e8e8e8"/><circle cx="11" cy="3.6" r="1.2" fill="#e8e8e8"/><rect x="1.6" y="6.4" width="12" height="8.6" fill="#222"/><rect x="3.4" y="9.4" width="7.6" height="3.4" fill="#8a96c8" stroke="#ccc" stroke-width=".6"/><path d="M13.6,9.6 L17,7.6 L17,14 L13.6,12.2Z" fill="#111"/></svg>
<svg style="position:absolute;left:49px;top:507px;" width="18" height="16" viewBox="0 0 18 16"><path d="M1,1 L5,0.6 L10,7 L7,9.4 L2.4,4 Z" fill="#3a6ad0" stroke="#1a3a8a" stroke-width=".8"/><path d="M7,9.4 L10,7 L15.6,10 C17,13 14,16 10.4,14.6 Z" fill="#e8e4d0" stroke="#8a8a8a" stroke-width=".8"/><path d="M4,3 L16,15.6" stroke="#e01010" stroke-width="1.1"/></svg>
<svg style="position:absolute;left:32px;top:965px;" width="12" height="16" viewBox="0 0 12 16"><g fill="none" stroke="#2a6ac0" stroke-width="1"><path d="M6,3 L6,5 M6,5 L3,8 M6,5 L9,8 M3,8 L1.6,12 M3,8 L4.6,12 M9,8 L7.6,12 M9,8 L10.6,12"/><circle cx="6" cy="2" r="1.2"/><circle cx="3" cy="8" r="1.2"/><circle cx="9" cy="8" r="1.2"/><circle cx="1.6" cy="13.2" r="1.1"/><circle cx="4.6" cy="13.2" r="1.1"/><circle cx="7.6" cy="13.2" r="1.1"/><circle cx="10.6" cy="13.2" r="1.1"/></g></svg>
<svg style="position:absolute;left:90px;top:964px;" width="14" height="17" viewBox="0 0 14 17"><rect x="0.6" y="0.6" width="12.4" height="15.4" fill="#f8f8f8" stroke="#333" stroke-width="1.1"/><rect x="2.6" y="2.6" width="6" height="5" fill="#3a6ad0"/><path d="M3,11 L9,11 M3,13.4 L11,13.4" stroke="#444" stroke-width="1"/><path d="M3,11 L4.6,9.8 M3,11 L4.6,12.2" stroke="#444" stroke-width=".8"/></svg>
<svg style="position:absolute;left:172px;top:965px;" width="17" height="17" viewBox="0 0 17 17"><circle cx="6.4" cy="6.4" r="5" fill="#cfe0f4" stroke="#7a8aa0" stroke-width="1.6"/><circle cx="6.4" cy="6.4" r="2.6" fill="#e8f0fa"/><path d="M10,10 L15,15.4" stroke="#d8a020" stroke-width="3"/><path d="M10.4,10.4 L12,12" stroke="#8a6a1a" stroke-width="3"/></svg>
<svg style="position:absolute;left:316px;top:233px;" width="17" height="18" viewBox="0 0 17 18"><path d="M4,0.5 L4,7.5 M0.5,4 L7.5,4 M1.5,1.5 L6.5,6.5 M6.5,1.5 L1.5,6.5" stroke="#e8b820" stroke-width="1.1"/><g fill="none" stroke="#2a7ad0" stroke-width="1"><path d="M10,4 L10,6 M10,6 L7,9.6 M10,6 L13,9.6 M7,9.6 L5.4,13.6 M7,9.6 L8.6,13.6 M13,9.6 L11.4,13.6 M13,9.6 L14.6,13.6"/><circle cx="10" cy="3.4" r="1.2"/><circle cx="7" cy="9.6" r="1.2"/><circle cx="13" cy="9.6" r="1.2"/><circle cx="5.4" cy="14.8" r="1.1"/><circle cx="8.6" cy="14.8" r="1.1"/><circle cx="11.4" cy="14.8" r="1.1"/><circle cx="14.6" cy="14.8" r="1.1"/></g></svg>
<svg style="position:absolute;left:8px;top:991px;" width="14" height="14" viewBox="0 0 14 14"><rect x="0.6" y="0.6" width="12.4" height="12.4" fill="#f8f8f8" stroke="#444" stroke-width="1.1"/><path d="M4,3.4 L4,5 M4,8 L4,9.6 M8.4,3.4 L8.4,5 M8.4,8 L8.4,9.6" stroke="#444" stroke-width="1.6"/><path d="M11,0.6 L13,0.6 L13,3" stroke="#444" fill="none"/></svg>
<svg style="position:absolute;left:12px;top:160px;" width="18" height="18" viewBox="0 0 18 18"><path d="M1,10 L1,5.4 C1,3.6 2.4,3.4 3.6,3.4 L8,3.4 L8,0.8 L12.6,5 L8,9.2 L8,6.6 L4.6,6.6 L4.6,10 Z" fill="#a8a8a8"/><path d="M9.6,7.6 L9.6,16 L11.6,14 L13,17.4 L14.4,16.8 L13,13.6 L15.6,13.4 Z" fill="#f0f0f0" stroke="#b8b8b8" stroke-width=".9"/></svg>
<svg style="position:absolute;left:38px;top:160px;" width="11" height="17" viewBox="0 0 11 17"><path d="M1,0.8 L1,13.4 L4,10.6 L6.2,15.6 L8.2,14.8 L6,9.8 L10,9.6 Z" fill="#fff" stroke="#111" stroke-width="1" stroke-linejoin="round"/></svg>
<svg style="position:absolute;left:57px;top:160px;" width="17" height="18" viewBox="0 0 17 18"><rect x="0.6" y="1.6" width="12" height="8" fill="#f4f4f4" stroke="#8a8a8a" stroke-width="1"/><path d="M7,5 L7,15.4 L9.4,13 L11.2,17 L12.8,16.4 L11,12.4 L14.4,12.2 Z" fill="#fff" stroke="#111" stroke-width="1" stroke-linejoin="round"/></svg>
<svg style="position:absolute;left:1386px;top:1020px;" width="16" height="17" viewBox="0 0 16 17"><circle cx="6.6" cy="6.6" r="5.6" fill="#f4f4f4" stroke="#444" stroke-width="1.3"/><path d="M4,3.4 L7.4,3.4 L9,5 L9,9.6 L4,9.6 Z" fill="#fff" stroke="#555" stroke-width=".8"/><path d="M10.6,10.6 L15,15" stroke="#333" stroke-width="2.4" stroke-linecap="round"/></svg>
<svg style="position:absolute;left:1409px;top:1020px;" width="16" height="17" viewBox="0 0 16 17"><circle cx="6.6" cy="6.6" r="5.6" fill="#f4f4f4" stroke="#444" stroke-width="1.3"/><rect x="3.8" y="3.8" width="5.6" height="5.6" fill="#fff" stroke="#555" stroke-width=".9"/><path d="M10.6,10.6 L15,15" stroke="#333" stroke-width="2.4" stroke-linecap="round"/></svg>
<svg style="position:absolute;left:1444px;top:1022px;" width="17" height="13" viewBox="0 0 17 13"><path d="M0.6,3.6 L3.6,0.6 L11,0.6 L11,9 L8,12 L0.6,12 Z" fill="#111"/><rect x="1.6" y="4.4" width="6.2" height="6.6" fill="#ffe452"/><path d="M1.8,3.4 L4,1.6 L9.8,1.6 L8,3.4Z" fill="#fff6a0"/><path d="M8.8,4 L10,2.6 L10,8.6 L8.8,10Z" fill="#2a5ad0"/><path d="M13.4,2.4 L13.4,8.4 M10.4,5.4 L16.4,5.4 M11.4,3.4 L15.4,7.4 M15.4,3.4 L11.4,7.4" stroke="#e01020" stroke-width="1"/></svg>
<svg style="position:absolute;left:1479px;top:1020px;" width="17" height="17" viewBox="0 0 17 17"><path d="M0.6,5 L5,0.6 L16,0.6 L16,11.6 L11.4,16.2 L0.6,16.2 Z" fill="#dbe8f6" stroke="#2a5a9a" stroke-width="1"/><path d="M11.4,5 L16,0.6 L16,11.6 L11.4,16.2Z" fill="#b4cdea" stroke="#2a5a9a" stroke-width=".8"/><rect x="0.6" y="5" width="10.8" height="11.2" fill="#3568a8" stroke="#2a5a9a" stroke-width="1"/></svg>
<svg style="position:absolute;left:1514px;top:1020px;" width="17" height="17" viewBox="0 0 17 17"><path d="M0.4,6 L2.6,4 L2.6,8Z" fill="#444"/><path d="M8,0.4 L6,2.6 L10,2.6Z" fill="#444"/><circle cx="7.6" cy="6.4" r="3" fill="#e0ecfa" stroke="#2a6ad0" stroke-width="1.4"/><path d="M4,8.6 L8,10.4 L11.6,7.6" fill="none" stroke="#2a6ad0" stroke-width="1"/><rect x="8.4" y="9" width="7.6" height="7.4" fill="#f4f4f4" stroke="#333" stroke-width="1.2"/><rect x="10.4" y="12.6" width="3.6" height="3.4" fill="#888"/><path d="M10,10.6 L14.6,10.6" stroke="#555" stroke-width="1"/></svg>
<svg style="position:absolute;left:1549px;top:1020px;" width="18" height="17" viewBox="0 0 18 17"><path d="M0.6,8 L11.4,2 L17,0.8 L13,9.6 L11.6,16.4 L1.6,16.4 Z" fill="#3f78c0" stroke="#2a5a9a" stroke-width=".9"/><path d="M0.6,8 L11.4,2 L17,0.8 L6.4,6.4 Z" fill="#f4f8fd" stroke="#2a5a9a" stroke-width=".7"/><path d="M13,9.6 L17,0.8 L14,12 L11.6,16.4Z" fill="#6a9ad8"/></svg>
<svg style="position:absolute;left:1572px;top:1021px;" width="18" height="16" viewBox="0 0 18 16"><circle cx="3.8" cy="10.4" r="3.2" fill="#e4eefa" stroke="#3a6aa8" stroke-width="1.3"/><circle cx="11" cy="11.4" r="3.2" fill="#e4eefa" stroke="#3a6aa8" stroke-width="1.3"/><path d="M1.6,8 L5.6,1.4 L6.6,1.4 M9.6,8.6 L14.6,2.6 L16,4 M6.8,10 L8,10.2" fill="none" stroke="#3a6aa8" stroke-width="1.2"/></svg>
<svg style="position:absolute;left:1605px;top:1020px;" width="17" height="17" viewBox="0 0 17 17"><path d="M0.6,5 L5,0.6 L16,0.6 L16,11.6 L11.4,16.2 L0.6,16.2 Z" fill="#e6effa" stroke="#4a6a9a" stroke-width="1"/><path d="M11.4,5 L16,0.6 L16,11.6 L11.4,16.2Z" fill="#c4d8f0" stroke="#4a6a9a" stroke-width=".8"/><rect x="0.6" y="5" width="10.8" height="11.2" fill="#9ab8e4" stroke="#4a6a9a" stroke-width="1"/></svg>
<svg style="position:absolute;left:1638px;top:1020px;" width="17" height="16" viewBox="0 0 17 16"><path d="M0.6,9 L4,5.6 L4,3 L7,0.6 L12.4,0.6 L12.4,4 L15.4,4 L15.4,9 L10.4,14.4 L0.6,14.4 Z" fill="#2a7adc" stroke="#0e3e90" stroke-width="1" stroke-linejoin="round"/><path d="M4,3 L9.4,3 L12.4,0.6 M9.4,3 L9.4,6 M0.6,9 L10.4,9 L15.4,4 M10.4,9 L10.4,14.4" fill="none" stroke="#0e3e90" stroke-width=".9"/><path d="M4.6,3.6 L9,3.6 L9,5.6 L4.6,5.6Z M1.2,9.6 L9.8,9.6 L9.8,13.8 L1.2,13.8Z" fill="#4a9af0"/></svg>
<svg style="position:absolute;left:1670px;top:1020px;" width="18" height="18" viewBox="0 0 18 18"><path d="M1,10 L1,5.4 C1,3.6 2.4,3.4 3.6,3.4 L8,3.4 L8,0.8 L12.6,5 L8,9.2 L8,6.6 L4.6,6.6 L4.6,10 Z" fill="#b0b0b0"/><path d="M9.6,7.6 L9.6,16 L11.6,14 L13,17.4 L14.4,16.8 L13,13.6 L15.6,13.4 Z" fill="#f0f0f0" stroke="#b0b0b0" stroke-width=".9"/></svg>
<svg style="position:absolute;left:1698px;top:1021px;" width="11" height="17" viewBox="0 0 11 17"><path d="M1,0.8 L1,13.4 L4,10.6 L6.2,15.6 L8.2,14.8 L6,9.8 L10,9.6 Z" fill="#fff" stroke="#111" stroke-width="1" stroke-linejoin="round"/></svg>
<svg style="position:absolute;left:1719px;top:1022px;" width="16" height="17" viewBox="0 0 16 17"><rect x="0.6" y="0.6" width="11" height="6" fill="#f8f8f8" stroke="#d0d0d0" stroke-width="1"/><path d="M6.6,3.4 L6.6,13.4 L8.8,11.2 L10.6,15 L12,14.4 L10.4,10.6 L13.4,10.4 Z" fill="#fff" stroke="#111" stroke-width="1" stroke-linejoin="round"/></svg>
<svg style="position:absolute;left:1898px;top:1021px;" width="17" height="16" viewBox="0 0 17 16"><path d="M8,5 L8,8 M3.4,11 L3.4,8 L12.8,8 L12.8,11" fill="none" stroke="#2a4ac0" stroke-width="1.2"/><rect x="5" y="0.6" width="6" height="4.4" fill="#e01020" stroke="#2a4ac0" stroke-width=".8"/><rect x="0.6" y="10.6" width="5.6" height="4.4" fill="#8ab0e8" stroke="#2a4ac0" stroke-width=".8"/><rect x="10" y="10.6" width="5.6" height="4.4" fill="#ffe11e" stroke="#2a4ac0" stroke-width=".8"/></svg>
</body></html>
